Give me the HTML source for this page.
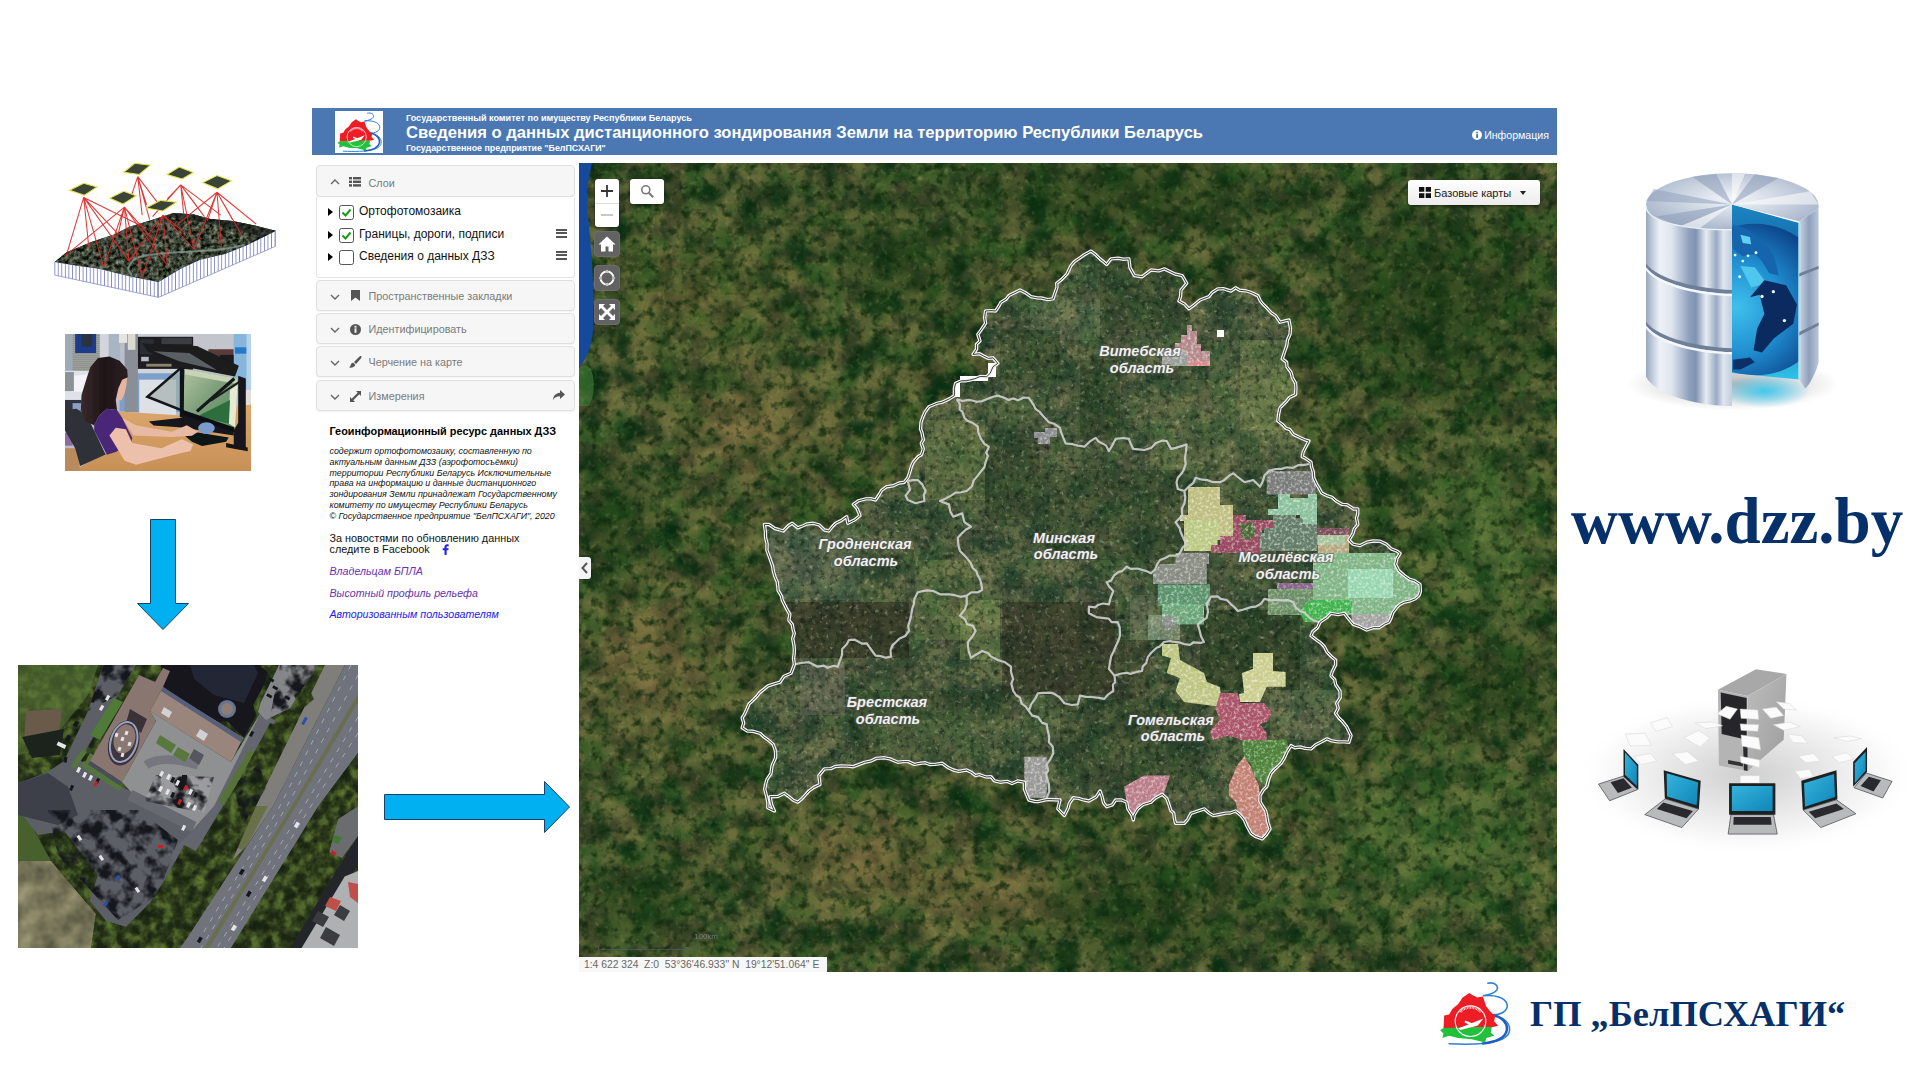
<!DOCTYPE html>
<html lang="ru">
<head>
<meta charset="utf-8">
<title>www.dzz.by</title>
<style>
*{box-sizing:border-box;margin:0;padding:0}
html,body{width:1920px;height:1080px;overflow:hidden;background:#fff}
body{position:relative;font-family:"Liberation Sans",sans-serif;color:#000}
.abs{position:absolute}
#hdr{left:312px;top:108px;width:1245px;height:47px;background:#4b77b2;color:#fff}
#hdr .logo{left:23px;top:3px;width:48px;height:42px;background:#fff}
#hdr .t1{left:94px;top:5px;font-size:9.07px;font-weight:bold;white-space:nowrap;line-height:10px}
#hdr .t2{left:94px;top:15px;font-size:16.6px;font-weight:bold;white-space:nowrap;line-height:19px}
#hdr .t3{left:94px;top:35px;font-size:8.87px;font-weight:bold;white-space:nowrap;line-height:10px}
#hdr .info{right:8px;top:21px;font-size:10.6px;white-space:nowrap;line-height:13px}
#side{left:312px;top:155px;width:266px;height:817px;background:#fff}
.pnl{left:3.5px;width:259px;height:31px;background:#f6f6f6;border:1px solid #e0e0e0;border-radius:4px;box-shadow:0 1px 1px rgba(0,0,0,.05);font-size:10.8px;color:#7a7a7a}
.pnl span{position:absolute;left:52px;top:8px;line-height:14px;white-space:nowrap}
.pnl svg{position:absolute}
#layers{left:3.5px;top:42px;width:259px;height:81px;border:1px solid #e4e4e4;border-top:none;border-radius:0 0 3px 3px;background:#fff}
.lrow{left:0;width:258px;height:22px;font-size:12px;line-height:14px;color:#111;white-space:nowrap}
.lrow .tri{position:absolute;left:11px;top:5px;width:0;height:0;border-left:5px solid #000;border-top:4.5px solid transparent;border-bottom:4.5px solid transparent}
.lrow .cb{position:absolute;left:22.3px;top:1.7px;width:15.5px;height:15.5px;border:1px solid #555;border-radius:2.5px;background:#fff}
.lrow .tx{position:absolute;left:42.5px;top:1px}
.lrow .hb{position:absolute;left:239.5px;top:2.6px;width:11px;height:9px;border-top:2px solid #555;border-bottom:2px solid #555}
.lrow .hb:after{content:"";position:absolute;left:0;top:1.5px;width:11px;height:2px;background:#555}
#stxt{left:17.5px;top:268.5px;width:240px}
#map{left:579px;top:163px;width:978px;height:809px;overflow:hidden;background:#3f5e2c}
.mbtn{background:#fff;border-radius:3px;box-shadow:0 1px 3px rgba(0,0,0,.5)}
.gbtn{background:#626262;border-radius:4px;border:1px solid #6c6c6c;width:26px;height:26px;left:15px}
</style>
</head>
<body>
<svg width="0" height="0" style="position:absolute"><defs><symbol id="lg" viewBox="55 48 320 290">
<path d="M272 56C300 50 322 66 312 86C304 100 278 108 250 112C300 106 352 118 358 152C362 182 325 198 290 197C340 204 374 232 368 270C360 312 280 334 100 325" fill="none" stroke="#2f7fd8" stroke-width="7" stroke-linecap="round"/>
<path d="M290 197C335 206 362 234 356 266C349 300 300 318 250 324" fill="none" stroke="#1c5fc0" stroke-width="11" stroke-linecap="round"/>
<path d="M78 200L100 195L115 170L140 150L160 120L190 100L205 110L225 120L250 115L258 140L265 160L290 190L305 200L300 225L318 245L290 252L75 256Z" fill="#ee1c25"/>
<path d="M60 265L75 255L290 250L285 275L300 290L265 300L260 320L200 305L140 300L100 290L70 300L75 280Z" fill="#22c13c"/>
<circle cx="195" cy="225" r="68" fill="none" stroke="#fff" stroke-width="5"/>
<path d="M140 257L252 213L228 244L150 264Z" fill="#fff"/><path d="M172 222L216 240L206 250L168 230Z" fill="#fff"/>
<path d="M150 185A60 60 0 0 1 240 185" fill="none" stroke="#fff" stroke-width="9" stroke-dasharray="4 3" opacity=".85"/>
</symbol></defs></svg>
<!-- ===== web app header ===== -->
<div id="hdr" class="abs">
  <div class="logo abs"><svg class="abs" style="left:1px;top:0.5px" width="47" height="41"><use href="#lg"/></svg></div>
  <div class="t1 abs">Государственный комитет по имуществу Республики Беларусь</div>
  <div class="t2 abs">Сведения о данных дистанционного зондирования Земли на территорию Республики Беларусь</div>
  <div class="t3 abs">Государственное предприятие "БелПСХАГИ"</div>
  <div class="info abs"><svg width="10" height="10" viewBox="0 0 10 10" style="vertical-align:-1px;margin-right:2px"><circle cx="5" cy="5" r="5" fill="#fff"/><rect x="4.2" y="4" width="1.8" height="4" fill="#4b77b2"/><rect x="4.2" y="1.7" width="1.8" height="1.6" fill="#4b77b2"/></svg>Информация</div>
</div>

<!-- ===== sidebar ===== -->
<div id="side" class="abs">
  <div class="pnl abs" style="top:10px;height:32px;border-radius:4px">
    <svg style="left:13px;top:12px" width="10" height="8" viewBox="0 0 10 8"><path d="M1 6l4-4 4 4" fill="none" stroke="#666" stroke-width="1.4"/></svg>
    <svg style="left:32px;top:11px" width="12" height="10" viewBox="0 0 12 10"><g fill="#555"><rect x="0" y="0" width="3" height="2.4"/><rect x="4" y="0" width="8" height="2.4"/><rect x="0" y="3.6" width="3" height="2.4"/><rect x="4" y="3.6" width="8" height="2.4"/><rect x="0" y="7.2" width="3" height="2.4"/><rect x="4" y="7.2" width="8" height="2.4"/></g></svg>
    <span style="top:10px">Слои</span>
  </div>
  <div id="layers" class="abs">
    <div class="lrow abs" style="top:6px"><i class="tri"></i><i class="cb"><svg width="13" height="13" viewBox="0 0 13 13"><path d="M2.5 6.5l3 3 5-6" fill="none" stroke="#1a9a1a" stroke-width="2"/></svg></i><span class="tx">Ортофотомозаика</span></div>
    <div class="lrow abs" style="top:29px"><i class="tri"></i><i class="cb"><svg width="13" height="13" viewBox="0 0 13 13"><path d="M2.5 6.5l3 3 5-6" fill="none" stroke="#1a9a1a" stroke-width="2"/></svg></i><span class="tx">Границы, дороги, подписи</span><i class="hb"></i></div>
    <div class="lrow abs" style="top:51px"><i class="tri"></i><i class="cb"></i><span class="tx">Сведения о данных ДЗЗ</span><i class="hb"></i></div>
  </div>
  <div class="pnl abs" style="top:125px">
    <svg style="left:13px;top:12px" width="10" height="8" viewBox="0 0 10 8"><path d="M1 2l4 4 4-4" fill="none" stroke="#666" stroke-width="1.4"/></svg>
    <svg style="left:34px;top:9px" width="9" height="11" viewBox="0 0 9 11"><path d="M0 0h9v11l-4.5-3.5L0 11z" fill="#555"/></svg>
    <span>Пространственные закладки</span>
  </div>
  <div class="pnl abs" style="top:158px">
    <svg style="left:13px;top:12px" width="10" height="8" viewBox="0 0 10 8"><path d="M1 2l4 4 4-4" fill="none" stroke="#666" stroke-width="1.4"/></svg>
    <svg style="left:33px;top:10px" width="11" height="11" viewBox="0 0 10 10"><circle cx="5" cy="5" r="5" fill="#555"/><rect x="4.1" y="4" width="1.8" height="4" fill="#f5f5f5"/><rect x="4.1" y="1.7" width="1.8" height="1.6" fill="#f5f5f5"/></svg>
    <span>Идентифицировать</span>
  </div>
  <div class="pnl abs" style="top:191px">
    <svg style="left:13px;top:12px" width="10" height="8" viewBox="0 0 10 8"><path d="M1 2l4 4 4-4" fill="none" stroke="#666" stroke-width="1.4"/></svg>
    <svg style="left:32px;top:9px" width="13" height="12" viewBox="0 0 13 12"><path d="M12 0c1 1 .5 2-1 3.500L7 8 5 6l4.500-4.500C11 0 11.500-.3 12 0zM4.300 6.800l2 2C6 11 3 12 0 11.500c1.500-1 1.500-2 2-3.200.4-1 1.300-1.500 2.300-1.500z" fill="#555"/></svg>
    <span>Черчение на карте</span>
  </div>
  <div class="pnl abs" style="top:225px">
    <svg style="left:13px;top:12px" width="10" height="8" viewBox="0 0 10 8"><path d="M1 2l4 4 4-4" fill="none" stroke="#666" stroke-width="1.4"/></svg>
    <svg style="left:33px;top:10px" width="11" height="11" viewBox="0 0 11 11"><path d="M6 0h5v5L9.300 3.300 3.300 9.300 5 11H0V6l1.700 1.700 6-6z" fill="#555"/></svg>
    <span>Измерения</span>
    <svg style="left:236px;top:9px" width="12" height="11" viewBox="0 0 12 11"><path d="M7 0l5 4.500L7 9V6.300C3.500 6.300 1.500 7.500 0 10c.3-4 2.500-7 7-7.300z" fill="#555"/></svg>
  </div>
  <div id="stxt" class="abs">
    <div style="font-weight:bold;font-size:10.9px;line-height:14px;white-space:nowrap;margin-top:0px">Геоинформационный ресурс данных ДЗЗ</div>
    <div style="font-style:italic;font-size:8.85px;line-height:10.95px;margin-top:8.1px;color:#111;white-space:nowrap">содержит ортофотомозаику, составленную по<br>актуальным данным ДЗЗ (аэрофотосъёмки)<br>территории Республики Беларусь Исключительные<br>права на информацию и данные дистанционного<br>зондирования Земли принадлежат Государственному<br>комитету по имуществу Республики Беларусь<br>© Государственное предприятие "БелПСХАГИ", 2020</div>
    <div style="font-size:10.85px;line-height:10.7px;margin-top:10.9px;position:relative;color:#111;white-space:nowrap">За новостями по обновлению данных<br>следите в Facebook<svg width="7" height="11" viewBox="0 0 7 11" style="position:absolute;left:112px;top:10.5px"><path d="M4.600 11V6.200h1.700l.3-1.900h-2V3.100c0-.6.200-.9 1-.9h1.100V.4C6.400.3 5.800.2 5.100.2 3.600.2 2.500 1.100 2.500 2.800v1.500H.700v1.900h1.800V11z" fill="#2222ee"/></svg></div>
    <div style="font-style:italic;font-size:10.65px;line-height:12px;margin-top:10.9px;color:#6a2fb0;white-space:nowrap">Владельцам БПЛА</div>
    <div style="font-style:italic;font-size:10.65px;line-height:12px;margin-top:9.400px;color:#6a2fb0;white-space:nowrap">Высотный профиль рельефа</div>
    <div style="font-style:italic;font-size:10.65px;line-height:12px;margin-top:9.400px;color:#1a1af0;white-space:nowrap">Авторизованным пользователям</div>
  </div>
</div>
<!-- ===== map ===== -->
<div id="map" class="abs">
<svg width="978" height="809" viewBox="579 163 978 809" style="position:absolute;left:0;top:0">
<defs>
<filter id="sat" x="0" y="0" width="100%" height="100%" color-interpolation-filters="sRGB">
  <feTurbulence type="fractalNoise" baseFrequency="0.038" numOctaves="6" seed="11" result="n"/>
  <feComponentTransfer in="n" result="n2">
    <feFuncR type="table" tableValues="0 0 0 0.08 0.35 0.75 0.95 1 1 1"/>
    <feFuncG type="table" tableValues="0 0 0 0.1 0.5 0.9 1 1 1 1"/>
    <feFuncB type="table" tableValues="0 0 0 0.15 0.6 1 1 1 1"/>
  </feComponentTransfer>
  <feColorMatrix in="n2" type="matrix" values="0.16 0.08 0.16 0 0.02  0.16 0.04 0.06 0 0.175  0.07 0.03 0.07 0 0.065  0 0 0 0 1"/>
</filter>
<filter id="sat2" x="0" y="0" width="100%" height="100%" color-interpolation-filters="sRGB">
  <feTurbulence type="fractalNoise" baseFrequency="0.11" numOctaves="3" seed="5" result="n"/>
  <feColorMatrix in="n" type="matrix" values="0 0 0 0 0.06  0 0 0 0 0.16  0 0 0 0 0.05  3.2 0 0 0 -1.55"/>
</filter>
<filter id="sat3" x="0" y="0" width="100%" height="100%" color-interpolation-filters="sRGB">
  <feTurbulence type="fractalNoise" baseFrequency="0.16" numOctaves="2" seed="8" result="n"/>
  <feColorMatrix in="n" type="matrix" values="0 0 0 0 0.72  0 0 0 0 0.7  0 0 0 0 0.45  0 3.0 0 0 -1.75"/>
</filter>
<filter id="ortho" x="0" y="0" width="100%" height="100%" color-interpolation-filters="sRGB">
  <feTurbulence type="fractalNoise" baseFrequency="0.2" numOctaves="3" seed="17" result="n"/>
  <feColorMatrix in="n" type="matrix" values="0 0 0 0 0.04  0 0 0 0 0.08  0 0 0 0 0.04  2.6 0 0 0 -1.3" result="d"/>
  <feColorMatrix in="n" type="matrix" values="0 0 0 0 0.78  0 0 0 0 0.82  0 0 0 0 0.68  0 -2.6 0 0 1.02" result="l"/>
  <feMerge><feMergeNode in="d"/><feMergeNode in="l"/></feMerge>
</filter>
<filter id="tex" x="0" y="0" width="100%" height="100%" color-interpolation-filters="sRGB">
  <feTurbulence type="fractalNoise" baseFrequency="0.35" numOctaves="2" seed="2" result="n"/>
  <feColorMatrix in="n" type="matrix" values="0 0 0 0 1  0 0 0 0 1  0 0 0 0 1  1.6 0 0 0 -0.72" result="w"/>
  <feComposite in="w" in2="SourceGraphic" operator="in" result="wi"/>
  <feMerge><feMergeNode in="SourceGraphic"/><feMergeNode in="wi"/></feMerge>
</filter>
<radialGradient id="gNW" cx="0.5" cy="0.5" r="0.5"><stop offset="0" stop-color="#8a7a3a" stop-opacity=".28"/><stop offset="1" stop-color="#8a7a3a" stop-opacity="0"/></radialGradient>
<radialGradient id="gDk" cx="0.5" cy="0.5" r="0.5"><stop offset="0" stop-color="#12330f" stop-opacity=".6"/><stop offset="1" stop-color="#173c14" stop-opacity="0"/></radialGradient>
<radialGradient id="gBr" cx="0.5" cy="0.5" r="0.5"><stop offset="0" stop-color="#a07c4c" stop-opacity=".5"/><stop offset="1" stop-color="#9a7a48" stop-opacity="0"/></radialGradient>
<radialGradient id="gLg" cx="0.5" cy="0.5" r="0.5"><stop offset="0" stop-color="#4f8436" stop-opacity=".45"/><stop offset="1" stop-color="#4f8436" stop-opacity="0"/></radialGradient>
<clipPath id="by"><path d="M954.4 395.6 L954.4 388.3 L955.6 383.3 L961.3 380.8 L966.1 380.7 L969.7 380.0 L974.9 378.7 L980.1 376.5 L986.7 376.7 L990.2 373.3 L992.9 366.9 L997.8 363.3 L993.0 357.8 L988.4 358.4 L983.2 355.8 L979.5 353.8 L973.0 354.4 L976.5 349.3 L976.5 344.2 L980.0 341.0 L977.8 334.4 L981.1 329.9 L985.6 323.3 L984.6 317.4 L985.6 311.0 L991.0 310.6 L995.6 311.0 L999.1 305.8 L1000.8 302.4 L1006.2 299.2 L1008.9 295.6 L1013.9 293.1 L1020.0 290.0 L1025.4 292.7 L1031.0 296.7 L1037.4 297.9 L1041.2 298.0 L1047.6 299.6 L1053.0 298.9 L1055.0 293.0 L1057.0 287.3 L1056.7 283.3 L1061.4 279.7 L1066.7 274.4 L1071.0 265.6 L1074.4 261.7 L1080.0 257.8 L1084.0 254.9 L1091.0 251.0 L1096.3 255.2 L1100.0 258.9 L1106.7 264.4 L1111.0 258.9 L1118.2 258.3 L1123.6 259.2 L1128.9 258.9 L1130.0 267.8 L1134.4 275.6 L1142.2 276.7 L1146.9 273.2 L1151.0 270.0 L1158.8 270.9 L1164.4 268.9 L1170.3 271.7 L1174.9 274.0 L1182.2 275.6 L1186.7 283.3 L1181.0 290.0 L1180.4 297.1 L1178.9 301.0 L1184.9 304.3 L1188.9 308.9 L1194.1 305.0 L1200.0 300.0 L1208.9 296.7 L1211.8 292.7 L1217.8 288.9 L1223.3 288.7 L1231.0 291.0 L1235.6 287.8 L1239.7 290.3 L1246.7 291.0 L1251.1 292.5 L1257.8 295.6 L1260.4 300.9 L1262.4 303.6 L1266.7 307.8 L1271.3 312.9 L1275.6 315.6 L1280.0 322.2 L1288.9 320.0 L1290.5 328.4 L1290.0 334.4 L1287.6 339.7 L1286.7 345.6 L1284.0 353.5 L1282.2 358.9 L1286.6 362.2 L1287.0 366.9 L1291.0 372.2 L1292.4 377.7 L1295.6 383.3 L1295.9 388.1 L1295.6 394.4 L1289.6 397.4 L1286.7 401.0 L1280.0 407.8 L1278.5 414.6 L1277.8 421.0 L1283.1 425.0 L1285.6 428.1 L1290.0 429.6 L1293.3 434.4 L1299.8 437.5 L1304.9 439.8 L1308.9 441.0 L1306.3 445.9 L1303.2 451.9 L1302.2 456.7 L1305.2 458.1 L1311.0 462.2 L1311.5 466.7 L1313.3 471.9 L1313.7 477.7 L1316.7 484.4 L1318.8 487.7 L1321.8 493.1 L1326.7 495.6 L1332.2 497.4 L1336.2 501.0 L1342.2 504.4 L1347.0 504.7 L1353.7 509.0 L1357.8 508.9 L1357.7 514.0 L1356.5 518.0 L1357.8 524.4 L1354.3 528.8 L1352.9 533.7 L1348.9 540.0 L1352.9 544.2 L1360.0 545.6 L1366.7 542.2 L1373.3 541.0 L1380.1 541.2 L1386.7 544.4 L1391.2 548.9 L1396.7 551.0 L1400.0 553.3 L1397.0 558.4 L1395.6 564.4 L1398.9 570.9 L1404.4 575.6 L1409.7 579.4 L1414.3 580.6 L1420.0 584.4 L1420.4 591.6 L1418.9 595.6 L1415.3 598.8 L1410.5 600.8 L1403.9 602.3 L1400.0 604.4 L1396.8 607.3 L1392.9 612.6 L1390.9 618.4 L1388.9 622.2 L1384.8 624.0 L1379.2 627.7 L1373.7 627.6 L1366.7 630.0 L1359.1 626.3 L1353.3 624.4 L1347.9 617.9 L1344.4 613.3 L1338.1 614.6 L1331.0 613.3 L1326.6 617.7 L1320.0 622.2 L1317.5 627.6 L1312.7 631.6 L1311.0 635.6 L1316.8 640.2 L1320.7 642.9 L1324.4 646.7 L1327.1 652.1 L1331.3 656.5 L1335.6 660.0 L1335.6 664.9 L1332.2 671.8 L1331.0 675.6 L1334.7 679.7 L1335.8 684.8 L1340.0 691.0 L1340.2 697.6 L1336.7 703.2 L1338.2 708.2 L1335.6 713.3 L1338.8 717.9 L1341.8 720.7 L1346.7 726.7 L1351.0 735.6 L1348.9 742.2 L1344.9 741.9 L1337.9 741.9 L1332.0 740.9 L1326.7 738.9 L1322.5 741.3 L1315.4 744.9 L1311.0 748.9 L1305.2 748.4 L1300.2 747.0 L1294.8 747.7 L1291.0 745.6 L1287.2 751.6 L1284.4 757.8 L1281.3 763.0 L1277.4 766.9 L1274.4 769.5 L1271.0 773.3 L1268.9 778.5 L1266.7 786.7 L1263.2 790.1 L1260.0 795.6 L1260.1 801.6 L1262.3 805.5 L1265.7 810.8 L1266.7 815.6 L1267.8 822.3 L1270.0 828.9 L1266.3 834.8 L1262.2 838.9 L1255.3 836.3 L1251.0 833.3 L1246.9 825.9 L1244.4 820.0 L1240.9 815.5 L1235.6 811.0 L1230.2 813.0 L1225.8 813.1 L1219.2 814.5 L1213.3 815.6 L1208.9 812.9 L1204.4 808.9 L1197.5 811.2 L1191.0 813.3 L1187.6 819.7 L1184.4 823.3 L1175.6 823.3 L1174.6 819.8 L1173.7 813.1 L1170.8 810.5 L1168.9 804.4 L1166.6 798.2 L1162.2 794.4 L1155.4 798.1 L1151.0 802.2 L1143.0 804.7 L1137.8 808.9 L1134.2 815.0 L1133.3 820.0 L1132.0 815.3 L1127.8 808.8 L1126.7 802.2 L1121.7 800.0 L1115.6 800.0 L1112.4 804.8 L1106.7 806.7 L1103.6 802.9 L1101.9 796.2 L1100.0 791.0 L1096.0 797.1 L1088.9 801.0 L1082.6 799.7 L1078.5 798.4 L1073.3 797.8 L1069.4 803.2 L1068.1 808.1 L1064.4 815.6 L1057.8 808.9 L1060.0 800.0 L1055.0 799.8 L1048.1 799.5 L1044.8 800.0 L1037.9 801.6 L1035.0 801.5 L1028.9 800.0 L1026.1 793.3 L1024.4 789.0 L1024.4 782.2 L1017.6 781.0 L1012.0 783.5 L1007.1 781.4 L1000.0 782.2 L994.4 780.8 L991.0 776.7 L986.1 777.0 L979.4 774.6 L975.6 775.6 L971.8 772.6 L966.7 770.0 L958.6 771.4 L953.3 770.0 L948.2 767.6 L942.2 763.3 L935.3 764.4 L929.7 764.5 L925.4 762.8 L920.0 763.3 L914.6 764.4 L908.2 761.6 L903.4 761.6 L897.8 762.2 L889.9 758.9 L884.4 757.8 L876.3 758.4 L871.0 761.0 L864.5 762.3 L860.0 764.1 L853.3 766.7 L847.5 766.1 L841.3 766.0 L835.2 766.5 L830.9 768.6 L824.4 768.9 L818.9 775.6 L820.0 784.4 L813.5 787.6 L808.9 791.0 L806.6 793.5 L802.5 798.2 L797.8 802.2 L793.3 800.3 L788.5 796.3 L784.4 793.3 L777.8 796.5 L770.0 796.7 L771.7 804.9 L774.4 811.0 L767.8 807.8 L767.9 802.4 L766.4 795.6 L764.7 789.1 L765.6 784.4 L766.9 779.6 L771.0 773.3 L771.8 767.1 L772.7 764.1 L775.6 757.8 L775.6 751.6 L773.3 744.4 L768.2 739.9 L763.8 736.9 L760.0 733.3 L753.0 731.3 L747.4 731.1 L742.2 727.8 L743.7 723.0 L742.2 717.8 L744.2 714.8 L747.1 708.4 L748.9 704.1 L753.3 700.0 L756.9 696.3 L759.7 692.6 L764.4 688.9 L768.0 685.9 L773.5 684.1 L780.0 682.2 L784.0 676.2 L791.0 673.3 L794.4 664.4 L793.5 658.5 L794.1 654.5 L794.4 649.9 L794.0 645.6 L792.7 638.8 L794.3 633.3 L793.2 629.9 L792.2 624.4 L788.9 620.3 L789.8 614.5 L786.7 608.9 L782.2 600.0 L781.5 596.2 L778.1 590.4 L777.8 586.6 L777.2 581.7 L775.1 577.1 L773.3 571.0 L772.6 566.1 L769.9 558.4 L768.3 554.0 L766.9 549.9 L767.1 543.7 L765.6 537.8 L765.4 531.7 L764.4 524.4 L769.1 524.5 L774.8 528.5 L778.6 529.5 L783.3 531.0 L788.3 525.8 L792.2 523.3 L797.8 527.8 L803.7 525.5 L806.8 524.0 L813.3 523.3 L819.2 524.9 L824.5 530.0 L828.9 531.0 L832.2 526.8 L835.6 523.3 L841.1 520.6 L846.7 516.7 L847.8 523.3 L854.8 519.8 L860.0 515.6 L857.1 508.6 L853.3 504.4 L858.3 500.9 L865.6 498.9 L871.4 498.8 L875.6 500.0 L879.5 494.0 L881.6 490.4 L886.7 486.7 L893.2 485.8 L899.1 483.0 L904.4 482.2 L907.8 477.8 L909.7 472.5 L911.4 466.2 L913.3 462.2 L917.9 456.8 L921.5 454.7 L923.3 448.9 L921.3 443.4 L923.4 439.7 L921.8 432.1 L920.5 429.0 L921.0 422.2 L922.7 417.3 L925.1 411.9 L928.9 406.7 L937.0 403.3 L942.2 402.2 L949.3 398.9Z"/></clipPath>
</defs>
<rect x="579" y="163" width="978" height="809" fill="#3e5f2a"/>
<rect x="579" y="163" width="978" height="809" filter="url(#sat)"/>
<!-- regional tints -->
<ellipse cx="750" cy="425" rx="110" ry="75" fill="url(#gBr)"/>
<ellipse cx="700" cy="300" rx="120" ry="90" fill="url(#gNW)"/>
<ellipse cx="650" cy="670" rx="100" ry="110" fill="url(#gBr)"/>
<ellipse cx="860" cy="860" rx="140" ry="70" fill="url(#gBr)"/>
<ellipse cx="1440" cy="840" rx="170" ry="110" fill="url(#gLg)"/>
<ellipse cx="1480" cy="540" rx="90" ry="120" fill="url(#gLg)"/>
<ellipse cx="1000" cy="900" rx="120" ry="50" fill="url(#gBr)"/>
<ellipse cx="1140" cy="195" rx="230" ry="60" fill="url(#gDk)"/>
<ellipse cx="1440" cy="300" rx="160" ry="150" fill="url(#gDk)"/>
<ellipse cx="1490" cy="690" rx="90" ry="70" fill="url(#gDk)"/>
<ellipse cx="610" cy="520" rx="50" ry="80" fill="url(#gDk)"/>
<ellipse cx="1140" cy="910" rx="140" ry="70" fill="url(#gDk)"/>
<ellipse cx="900" cy="260" rx="90" ry="70" fill="url(#gDk)"/>
<ellipse cx="640" cy="900" rx="70" ry="60" fill="url(#gDk)"/>
<rect x="579" y="163" width="978" height="809" filter="url(#sat2)" opacity=".8"/>
<rect x="579" y="163" width="978" height="809" filter="url(#sat3)" opacity=".28"/>
<!-- sea strip -->
<path d="M579 163h13c-2 10-5 22-5 33 0 20 4 45 5 67s2 45 1 67c-1 15-6 28-14 38z" fill="#16489c"/>
<path d="M579 368c6-6 12-2 14 8s0 24-4 30h-10z" fill="#4a8a3c" opacity=".55"/>
<!-- country -->
<g clip-path="url(#by)">
  <rect x="740" y="250" width="690" height="600" fill="#6f7c76" fill-opacity=".26"/>
  <rect x="786.0" y="602.0" width="123.0" height="56.0" fill="#2e2a1e" fill-opacity="0.55" /><rect x="1002.0" y="602.0" width="113.0" height="93.0" fill="#2e2a1e" fill-opacity="0.5" /><rect x="1115.0" y="640.0" width="35.0" height="60.0" fill="#2e2a1e" fill-opacity="0.3" /><rect x="925.0" y="420.0" width="60.0" height="80.0" fill="#a8b860" fill-opacity="0.22" /><rect x="915.0" y="560.0" width="60.0" height="80.0" fill="#a8b860" fill-opacity="0.16" /><rect x="960.0" y="600.0" width="40.0" height="60.0" fill="#b4c068" fill-opacity="0.26" /><rect x="1240.0" y="340.0" width="56.0" height="90.0" fill="#b0be68" fill-opacity="0.22" /><rect x="1150.0" y="380.0" width="146.0" height="90.0" fill="#a8b860" fill-opacity="0.12" /><rect x="770.0" y="530.0" width="90.0" height="70.0" fill="#8a9080" fill-opacity="0.22" /><rect x="800.0" y="665.0" width="45.0" height="50.0" fill="#7a7468" fill-opacity="0.4" /><rect x="1030.0" y="300.0" width="70.0" height="40.0" fill="#8fa57a" fill-opacity="0.18" /><rect x="1000.0" y="330.0" width="60.0" height="50.0" fill="#1f3a1c" fill-opacity="0.3" /><rect x="1080.0" y="360.0" width="40.0" height="80.0" fill="#1c3618" fill-opacity="0.3" /><rect x="1040.0" y="470.0" width="140.0" height="90.0" fill="#1e381a" fill-opacity="0.25" /><rect x="985.0" y="440.0" width="55.0" height="80.0" fill="#1c3418" fill-opacity="0.28" /><rect x="1100.0" y="260.0" width="90.0" height="70.0" fill="#1a3418" fill-opacity="0.25" /><rect x="1200.0" y="610.0" width="100.0" height="80.0" fill="#162c14" fill-opacity="0.4" /><rect x="1060.0" y="700.0" width="140.0" height="90.0" fill="#1a3416" fill-opacity="0.25" /><rect x="850.0" y="690.0" width="160.0" height="70.0" fill="#1e3a1a" fill-opacity="0.22" /><rect x="880.0" y="720.0" width="140.0" height="40.0" fill="#9eae76" fill-opacity="0.12" /><rect x="1130.0" y="595.0" width="30.0" height="45.0" fill="#869a7a" fill-opacity="0.25" /><rect x="1270.0" y="690.0" width="70.0" height="50.0" fill="#8a9070" fill-opacity="0.2" />
  <rect x="740" y="250" width="690" height="600" filter="url(#ortho)" opacity=".6"/>
  <g filter="url(#tex)">
  <path d="M1187.0 325.0 L1192.0 325.0 L1192.0 331.0 L1197.0 331.0 L1197.0 344.0 L1201.0 344.0 L1201.0 351.0 L1210.0 351.0 L1210.0 366.0 L1187.0 366.0 L1187.0 355.0 L1175.0 355.0 L1175.0 343.0 L1181.0 343.0 L1181.0 335.0 L1187.0 335.0Z" fill="#b98b8f" fill-opacity="0.95" /><rect x="1162.0" y="350.0" width="26.0" height="16.0" fill="#a9a9a9" fill-opacity="0.85" /><rect x="1188.0" y="361.0" width="22.0" height="5.0" fill="#d98c8c" fill-opacity="0.95" /><rect x="1217.0" y="330.0" width="7.0" height="7.0" fill="#ffffff" fill-opacity="1" /><path d="M1034.0 432.0 L1045.0 432.0 L1045.0 428.0 L1057.0 428.0 L1057.0 437.0 L1050.0 437.0 L1050.0 444.0 L1038.0 444.0 L1038.0 438.0 L1034.0 438.0Z" fill="#8f8f93" fill-opacity="0.9" /><rect x="1266.7" y="471.0" width="48.9" height="23.4" fill="#7c7d7c" fill-opacity="0.95" /><path d="M1278.0 494.0 L1290.0 494.0 L1290.0 498.0 L1308.0 498.0 L1308.0 494.0 L1317.0 494.0 L1317.0 524.0 L1300.0 524.0 L1300.0 515.0 L1268.0 515.0 L1268.0 509.0 L1278.0 509.0Z" fill="#8fc7a1" fill-opacity="0.95" /><path d="M1188.0 487.0 L1220.0 487.0 L1220.0 505.0 L1233.0 505.0 L1233.0 540.0 L1217.0 540.0 L1217.0 551.0 L1184.0 551.0 L1184.0 521.0 L1180.0 521.0 L1180.0 515.0 L1188.0 515.0Z" fill="#c9c787" fill-opacity="0.92" /><rect x="1186.0" y="520.0" width="32.0" height="31.0" fill="#b8d483" fill-opacity="0.55" /><path d="M1233.0 515.0 L1246.0 515.0 L1246.0 520.0 L1273.0 520.0 L1273.0 530.0 L1262.0 530.0 L1262.0 553.0 L1211.0 553.0 L1211.0 545.0 L1220.0 545.0 L1220.0 536.0 L1233.0 536.0Z" fill="#a04a63" fill-opacity="0.92" /><path d="M1240.0 524.0 L1252.0 522.0 L1256.0 532.0 L1250.0 540.0 L1242.0 538.0Z" fill="#4c6a38" fill-opacity="1" /><path d="M1273.0 515.0 L1296.0 515.0 L1296.0 518.0 L1303.0 518.0 L1303.0 524.0 L1317.0 524.0 L1317.0 551.0 L1260.0 551.0 L1260.0 533.0 L1264.0 533.0 L1264.0 528.0 L1273.0 528.0Z" fill="#66806c" fill-opacity="0.95" /><rect x="1317.0" y="528.0" width="32.0" height="9.0" fill="#8a4f62" fill-opacity="0.8" /><rect x="1317.8" y="535.0" width="31.2" height="18.0" fill="#c9b58a" fill-opacity="0.85" /><rect x="1317.0" y="535.0" width="28.0" height="10.0" fill="#9fd3b0" fill-opacity="0.6" /><path d="M1313.0 553.0 L1395.0 553.0 L1397.0 564.0 L1404.0 575.0 L1420.0 584.0 L1419.0 596.0 L1400.0 604.0 L1392.0 615.0 L1313.0 615.0Z" fill="#86bd8c" fill-opacity="0.92" /><rect x="1347.8" y="569.0" width="45.2" height="29.0" fill="#9bdcb6" fill-opacity="0.85" /><rect x="1277.0" y="583.0" width="36.0" height="6.0" fill="#9a6aa0" fill-opacity="0.8" /><rect x="1268.0" y="589.0" width="45.0" height="26.0" fill="#7faa7c" fill-opacity="0.7" /><path d="M1310.0 600.0 L1352.0 600.0 L1352.0 613.0 L1331.0 613.0 L1320.0 622.0 L1304.0 622.0 L1300.0 611.0Z" fill="#3cb34a" fill-opacity="0.95" /><path d="M1351.0 614.0 L1392.0 614.0 L1389.0 622.0 L1367.0 630.0 L1353.0 624.0Z" fill="#a6a6a6" fill-opacity="0.95" /><path d="M1175.6 553.0 L1209.0 553.0 L1209.0 564.0 L1206.7 564.0 L1206.7 584.0 L1153.0 584.0 L1153.0 574.0 L1160.0 564.0 L1175.6 564.0Z" fill="#8d9089" fill-opacity="0.92" /><rect x="1157.8" y="584.4" width="52.2" height="21.6" fill="#5f9a72" fill-opacity="0.9" /><rect x="1162.0" y="604.0" width="42.0" height="20.4" fill="#6fae80" fill-opacity="0.9" /><rect x="1148.0" y="615.0" width="32.0" height="25.0" fill="#8fa58a" fill-opacity="0.5" /><path d="M1164.0 614.0 L1172.0 616.0 L1176.0 626.0 L1168.0 630.0 L1162.0 624.0Z" fill="#8c8c8c" fill-opacity="0.9" /><path d="M1162.0 644.0 L1178.0 644.0 L1180.0 660.0 L1204.0 673.0 L1207.0 682.0 L1220.0 687.0 L1222.0 707.0 L1184.0 702.0 L1175.6 691.0 L1180.0 678.0 L1166.7 673.0 L1171.0 658.0 L1162.0 655.6Z" fill="#c5cb86" fill-opacity="0.95" /><path d="M1253.0 653.0 L1273.0 653.0 L1273.0 671.0 L1285.6 672.0 L1285.6 686.7 L1266.7 686.7 L1260.0 702.0 L1240.0 702.0 L1239.0 694.0 L1244.0 693.0 L1242.0 673.0 L1253.0 669.0Z" fill="#d3d593" fill-opacity="0.95" /><path d="M1220.0 693.0 L1237.8 693.0 L1240.0 703.0 L1264.0 703.0 L1272.0 713.0 L1266.7 722.0 L1260.0 724.0 L1266.7 733.0 L1266.7 741.0 L1257.8 744.0 L1244.0 741.0 L1228.9 735.6 L1213.0 740.0 L1210.0 731.0 L1220.0 720.0 L1215.6 709.0Z" fill="#b0546a" fill-opacity="0.95" /><path d="M1242.0 740.0 L1286.7 740.0 L1288.9 749.0 L1266.7 786.7 L1253.0 775.6 L1251.0 764.0 L1244.0 757.8Z" fill="#4f8a3a" fill-opacity="0.85" /><path d="M1124.0 786.7 L1144.0 775.6 L1170.0 775.6 L1164.0 793.0 L1153.0 802.0 L1137.8 809.0 L1133.0 817.8 L1126.7 802.0Z" fill="#c2808c" fill-opacity="0.95" /><path d="M1244.0 756.7 L1251.0 766.7 L1254.0 775.6 L1259.0 785.6 L1260.0 797.8 L1266.7 815.6 L1270.0 828.9 L1262.0 838.9 L1251.0 833.0 L1244.0 820.0 L1237.8 811.0 L1235.6 802.0 L1228.9 795.6 L1228.9 784.4 L1233.0 775.6 L1237.8 764.4Z" fill="#c98476" fill-opacity="0.95" /><rect x="1024.4" y="756.7" width="22.3" height="41.1" fill="#9c9c9c" fill-opacity="0.95" />
  </g>
</g>
<path d="M955 383h5v14h-5zM960 376h28v5h-28zM988 363h8v14h-8z" fill="#fff"/>
<path d="M956.7 399.0 L959.9 404.4 L959.7 409.7 L962.4 411.6 L964.4 417.8 L967.3 420.7 L973.2 423.1 L977.8 426.7 L978.3 432.3 L981.0 438.9 L984.4 443.9 L988.9 446.7 L986.2 452.7 L987.8 455.8 L985.6 462.2 L984.4 467.3 L981.7 470.5 L977.8 475.6 L973.7 480.4 L972.0 486.2 L966.7 491.0 L961.0 492.3 L955.5 492.6 L951.0 495.6 L944.2 499.4 L940.0 501.0 L948.9 504.4 L950.4 511.9 L953.3 516.7 L962.2 513.3 L964.4 522.2 L971.0 526.7 L965.8 529.7 L962.2 533.1 L957.8 537.8 L958.5 545.9 L960.0 551.0 L966.7 557.8 L970.7 563.2 L972.7 568.0 L976.4 571.3 L977.8 575.6 L980.0 579.0 L981.5 585.0 L982.2 590.0 L977.8 592.3 L971.2 592.3 L966.7 595.6 M956.7 399.0 L962.2 401.0 L968.6 399.8 L972.1 400.5 L976.6 401.8 L982.2 401.0 L988.9 398.4 L993.1 396.8 L997.8 395.6 L1003.5 397.5 L1008.9 400.0 L1012.8 398.4 L1018.0 400.2 L1023.9 397.5 L1028.9 397.8 L1033.6 404.9 L1035.6 408.9 L1039.9 412.2 L1043.5 416.5 L1048.9 422.2 L1053.9 423.7 L1060.0 427.8 L1061.0 432.2 L1064.0 439.4 L1065.6 443.3 L1072.7 444.2 L1077.9 445.6 L1084.4 446.7 L1089.6 441.7 L1095.6 437.8 L1098.6 441.5 L1106.0 445.4 L1108.9 451.0 L1112.3 445.4 L1115.6 438.9 L1123.4 438.0 L1128.9 438.9 L1130.4 443.1 L1133.3 448.9 L1138.5 449.3 L1144.4 450.0 L1151.5 447.8 L1155.6 443.3 L1162.3 440.6 L1166.7 441.0 L1171.0 448.9 L1174.7 448.1 L1182.7 445.8 L1186.7 444.4 L1186.3 449.0 L1185.0 458.1 L1185.7 464.0 L1184.0 469.0 L1182.4 472.6 L1177.8 477.8 L1176.5 482.3 L1177.8 489.0 L1184.4 491.0 M1184.4 491.0 L1188.2 487.2 L1193.3 482.9 L1195.6 477.8 L1202.2 479.7 L1207.7 480.2 L1212.4 482.0 L1220.0 482.2 L1223.6 480.6 L1229.3 475.6 L1233.3 473.3 L1237.7 477.0 L1244.4 482.2 L1253.3 480.0 L1260.0 486.7 L1262.6 481.8 L1264.4 475.6 L1268.8 470.9 L1275.6 469.0 L1281.5 468.9 L1286.8 467.3 L1293.0 467.8 L1298.7 465.0 L1303.0 465.1 L1309.0 464.0 M1184.4 491.0 L1185.3 497.6 L1184.5 503.2 L1181.9 508.6 L1182.2 515.6 L1175.6 522.2 L1179.8 528.4 L1180.5 531.8 L1183.9 539.4 L1186.7 544.4 L1182.7 547.4 L1179.8 553.2 L1175.6 555.6 L1169.5 555.6 L1164.7 558.3 L1160.0 560.0 L1157.6 563.5 L1155.0 569.6 L1151.0 573.3 L1146.2 571.0 L1142.8 570.1 L1137.4 568.5 L1130.7 568.9 L1126.7 566.7 L1122.0 571.2 L1118.7 571.9 L1113.8 575.7 L1111.2 580.5 L1106.7 582.2 L1108.9 586.3 L1113.3 591.0 L1110.2 599.2 L1108.9 604.4 L1102.8 603.5 L1097.5 605.2 L1095.2 607.4 L1088.9 606.7 L1088.9 613.3 L1096.3 617.1 L1102.2 617.8 L1108.8 618.7 L1111.6 622.1 L1117.8 622.2 L1119.7 627.4 L1120.0 635.6 L1118.3 640.8 L1115.6 646.7 L1113.5 651.7 L1111.2 656.2 L1109.9 662.9 L1108.9 668.9 L1114.4 675.6 M1114.4 675.6 L1121.4 673.5 L1126.9 672.8 L1130.5 673.9 L1137.5 671.7 L1142.0 671.0 L1142.8 666.4 L1146.1 663.3 L1147.8 657.1 L1151.0 653.0 L1156.6 647.8 L1159.4 646.7 L1164.0 642.0 L1169.9 641.0 L1172.5 641.6 L1180.3 642.7 L1184.0 644.0 L1189.8 644.8 L1193.5 642.3 L1200.5 642.9 L1204.0 642.0 L1201.2 636.8 L1199.3 629.5 L1197.8 624.4 L1200.7 621.9 L1206.7 617.8 L1208.0 611.5 L1206.7 604.4 L1211.0 596.7 L1217.7 596.3 L1220.6 598.8 L1226.7 600.0 L1231.9 605.1 L1233.7 606.5 L1237.8 611.0 L1243.5 609.5 L1251.0 607.1 L1255.6 606.7 L1261.0 603.6 L1264.4 598.9 L1271.2 600.4 L1276.3 599.7 L1281.2 600.4 L1288.4 600.2 L1293.3 602.2 L1295.7 607.4 L1300.0 611.0 L1304.2 612.4 L1308.5 616.8 L1314.4 620.9 L1320.0 622.2 M1114.4 675.6 L1115.3 682.3 L1112.9 684.5 L1113.3 691.0 L1107.6 694.9 L1104.4 698.9 L1099.0 697.9 L1091.3 697.0 L1086.5 697.0 L1080.0 695.6 L1077.8 704.4 L1071.9 705.0 L1064.4 703.3 L1059.4 697.1 L1053.3 693.3 L1049.2 692.6 L1043.2 692.9 L1037.8 693.3 L1035.6 698.2 L1031.1 704.3 L1028.9 711.0 M1028.9 711.0 L1032.2 715.6 L1038.1 717.1 L1041.9 722.6 L1046.7 724.4 L1047.5 729.5 L1049.2 736.8 L1048.9 742.2 L1052.7 746.5 L1053.3 753.3 L1049.9 759.9 L1046.7 764.4 L1048.3 770.7 L1046.3 773.7 L1047.1 778.4 L1048.9 784.4 L1049.3 791.4 L1046.7 797.8 M966.7 595.6 L966.7 604.4 L964.7 609.6 L960.0 615.6 L965.1 619.3 L967.0 624.2 L973.1 625.9 L975.6 631.0 L972.0 637.0 L967.8 642.2 L968.0 647.0 L968.8 651.7 L971.0 657.8 L975.8 654.7 L982.2 651.0 L987.9 653.1 L991.0 656.4 L997.8 660.0 L1005.0 662.3 L1011.0 666.7 L1011.0 671.8 L1013.1 679.0 L1011.3 683.6 L1013.3 691.0 L1016.1 695.2 L1020.0 697.7 L1021.6 703.6 L1025.5 706.3 L1028.9 711.0 M966.7 595.6 L960.5 596.8 L954.9 595.2 L949.5 594.4 L944.4 594.4 L940.0 594.3 L933.3 591.0 L927.7 590.4 L923.7 590.9 L917.8 592.2 L914.4 599.1 L913.8 604.4 L912.2 608.9 L911.1 615.7 L910.4 618.9 L908.2 625.6 L908.9 631.0 L905.2 636.0 L899.2 638.7 L896.0 642.0 L892.2 645.6 L890.5 650.5 L891.0 656.7 L885.9 657.7 L879.5 655.9 L875.6 655.6 L873.6 653.0 L868.7 646.2 L866.7 643.3 L862.2 643.7 L854.8 639.7 L848.9 640.0 L846.9 644.1 L842.2 648.9 L842.0 655.2 L840.3 659.7 L837.8 666.7 L833.7 665.8 L827.5 667.8 L823.9 665.7 L817.8 666.7 L808.9 662.2 L800.7 663.0 L794.4 664.4 M907.8 481.0 L912.9 480.1 L917.8 480.0 L922.2 484.4 L925.6 491.0 L923.8 495.2 L924.4 501.0 L915.6 503.3 L907.8 500.0 L905.6 495.6 L910.0 490.0 L907.8 481.0" fill="none" stroke="#d0d0d0" stroke-width="2.2" stroke-linejoin="round" stroke-opacity=".9"/>
<path d="M954.4 395.6 L954.4 388.3 L955.6 383.3 L961.3 380.8 L966.1 380.7 L969.7 380.0 L974.9 378.7 L980.1 376.5 L986.7 376.7 L990.2 373.3 L992.9 366.9 L997.8 363.3 L993.0 357.8 L988.4 358.4 L983.2 355.8 L979.5 353.8 L973.0 354.4 L976.5 349.3 L976.5 344.2 L980.0 341.0 L977.8 334.4 L981.1 329.9 L985.6 323.3 L984.6 317.4 L985.6 311.0 L991.0 310.6 L995.6 311.0 L999.1 305.8 L1000.8 302.4 L1006.2 299.2 L1008.9 295.6 L1013.9 293.1 L1020.0 290.0 L1025.4 292.7 L1031.0 296.7 L1037.4 297.9 L1041.2 298.0 L1047.6 299.6 L1053.0 298.9 L1055.0 293.0 L1057.0 287.3 L1056.7 283.3 L1061.4 279.7 L1066.7 274.4 L1071.0 265.6 L1074.4 261.7 L1080.0 257.8 L1084.0 254.9 L1091.0 251.0 L1096.3 255.2 L1100.0 258.9 L1106.7 264.4 L1111.0 258.9 L1118.2 258.3 L1123.6 259.2 L1128.9 258.9 L1130.0 267.8 L1134.4 275.6 L1142.2 276.7 L1146.9 273.2 L1151.0 270.0 L1158.8 270.9 L1164.4 268.9 L1170.3 271.7 L1174.9 274.0 L1182.2 275.6 L1186.7 283.3 L1181.0 290.0 L1180.4 297.1 L1178.9 301.0 L1184.9 304.3 L1188.9 308.9 L1194.1 305.0 L1200.0 300.0 L1208.9 296.7 L1211.8 292.7 L1217.8 288.9 L1223.3 288.7 L1231.0 291.0 L1235.6 287.8 L1239.7 290.3 L1246.7 291.0 L1251.1 292.5 L1257.8 295.6 L1260.4 300.9 L1262.4 303.6 L1266.7 307.8 L1271.3 312.9 L1275.6 315.6 L1280.0 322.2 L1288.9 320.0 L1290.5 328.4 L1290.0 334.4 L1287.6 339.7 L1286.7 345.6 L1284.0 353.5 L1282.2 358.9 L1286.6 362.2 L1287.0 366.9 L1291.0 372.2 L1292.4 377.7 L1295.6 383.3 L1295.9 388.1 L1295.6 394.4 L1289.6 397.4 L1286.7 401.0 L1280.0 407.8 L1278.5 414.6 L1277.8 421.0 L1283.1 425.0 L1285.6 428.1 L1290.0 429.6 L1293.3 434.4 L1299.8 437.5 L1304.9 439.8 L1308.9 441.0 L1306.3 445.9 L1303.2 451.9 L1302.2 456.7 L1305.2 458.1 L1311.0 462.2 L1311.5 466.7 L1313.3 471.9 L1313.7 477.7 L1316.7 484.4 L1318.8 487.7 L1321.8 493.1 L1326.7 495.6 L1332.2 497.4 L1336.2 501.0 L1342.2 504.4 L1347.0 504.7 L1353.7 509.0 L1357.8 508.9 L1357.7 514.0 L1356.5 518.0 L1357.8 524.4 L1354.3 528.8 L1352.9 533.7 L1348.9 540.0 L1352.9 544.2 L1360.0 545.6 L1366.7 542.2 L1373.3 541.0 L1380.1 541.2 L1386.7 544.4 L1391.2 548.9 L1396.7 551.0 L1400.0 553.3 L1397.0 558.4 L1395.6 564.4 L1398.9 570.9 L1404.4 575.6 L1409.7 579.4 L1414.3 580.6 L1420.0 584.4 L1420.4 591.6 L1418.9 595.6 L1415.3 598.8 L1410.5 600.8 L1403.9 602.3 L1400.0 604.4 L1396.8 607.3 L1392.9 612.6 L1390.9 618.4 L1388.9 622.2 L1384.8 624.0 L1379.2 627.7 L1373.7 627.6 L1366.7 630.0 L1359.1 626.3 L1353.3 624.4 L1347.9 617.9 L1344.4 613.3 L1338.1 614.6 L1331.0 613.3 L1326.6 617.7 L1320.0 622.2 L1317.5 627.6 L1312.7 631.6 L1311.0 635.6 L1316.8 640.2 L1320.7 642.9 L1324.4 646.7 L1327.1 652.1 L1331.3 656.5 L1335.6 660.0 L1335.6 664.9 L1332.2 671.8 L1331.0 675.6 L1334.7 679.7 L1335.8 684.8 L1340.0 691.0 L1340.2 697.6 L1336.7 703.2 L1338.2 708.2 L1335.6 713.3 L1338.8 717.9 L1341.8 720.7 L1346.7 726.7 L1351.0 735.6 L1348.9 742.2 L1344.9 741.9 L1337.9 741.9 L1332.0 740.9 L1326.7 738.9 L1322.5 741.3 L1315.4 744.9 L1311.0 748.9 L1305.2 748.4 L1300.2 747.0 L1294.8 747.7 L1291.0 745.6 L1287.2 751.6 L1284.4 757.8 L1281.3 763.0 L1277.4 766.9 L1274.4 769.5 L1271.0 773.3 L1268.9 778.5 L1266.7 786.7 L1263.2 790.1 L1260.0 795.6 L1260.1 801.6 L1262.3 805.5 L1265.7 810.8 L1266.7 815.6 L1267.8 822.3 L1270.0 828.9 L1266.3 834.8 L1262.2 838.9 L1255.3 836.3 L1251.0 833.3 L1246.9 825.9 L1244.4 820.0 L1240.9 815.5 L1235.6 811.0 L1230.2 813.0 L1225.8 813.1 L1219.2 814.5 L1213.3 815.6 L1208.9 812.9 L1204.4 808.9 L1197.5 811.2 L1191.0 813.3 L1187.6 819.7 L1184.4 823.3 L1175.6 823.3 L1174.6 819.8 L1173.7 813.1 L1170.8 810.5 L1168.9 804.4 L1166.6 798.2 L1162.2 794.4 L1155.4 798.1 L1151.0 802.2 L1143.0 804.7 L1137.8 808.9 L1134.2 815.0 L1133.3 820.0 L1132.0 815.3 L1127.8 808.8 L1126.7 802.2 L1121.7 800.0 L1115.6 800.0 L1112.4 804.8 L1106.7 806.7 L1103.6 802.9 L1101.9 796.2 L1100.0 791.0 L1096.0 797.1 L1088.9 801.0 L1082.6 799.7 L1078.5 798.4 L1073.3 797.8 L1069.4 803.2 L1068.1 808.1 L1064.4 815.6 L1057.8 808.9 L1060.0 800.0 L1055.0 799.8 L1048.1 799.5 L1044.8 800.0 L1037.9 801.6 L1035.0 801.5 L1028.9 800.0 L1026.1 793.3 L1024.4 789.0 L1024.4 782.2 L1017.6 781.0 L1012.0 783.5 L1007.1 781.4 L1000.0 782.2 L994.4 780.8 L991.0 776.7 L986.1 777.0 L979.4 774.6 L975.6 775.6 L971.8 772.6 L966.7 770.0 L958.6 771.4 L953.3 770.0 L948.2 767.6 L942.2 763.3 L935.3 764.4 L929.7 764.5 L925.4 762.8 L920.0 763.3 L914.6 764.4 L908.2 761.6 L903.4 761.6 L897.8 762.2 L889.9 758.9 L884.4 757.8 L876.3 758.4 L871.0 761.0 L864.5 762.3 L860.0 764.1 L853.3 766.7 L847.5 766.1 L841.3 766.0 L835.2 766.5 L830.9 768.6 L824.4 768.9 L818.9 775.6 L820.0 784.4 L813.5 787.6 L808.9 791.0 L806.6 793.5 L802.5 798.2 L797.8 802.2 L793.3 800.3 L788.5 796.3 L784.4 793.3 L777.8 796.5 L770.0 796.7 L771.7 804.9 L774.4 811.0 L767.8 807.8 L767.9 802.4 L766.4 795.6 L764.7 789.1 L765.6 784.4 L766.9 779.6 L771.0 773.3 L771.8 767.1 L772.7 764.1 L775.6 757.8 L775.6 751.6 L773.3 744.4 L768.2 739.9 L763.8 736.9 L760.0 733.3 L753.0 731.3 L747.4 731.1 L742.2 727.8 L743.7 723.0 L742.2 717.8 L744.2 714.8 L747.1 708.4 L748.9 704.1 L753.3 700.0 L756.9 696.3 L759.7 692.6 L764.4 688.9 L768.0 685.9 L773.5 684.1 L780.0 682.2 L784.0 676.2 L791.0 673.3 L794.4 664.4 L793.5 658.5 L794.1 654.5 L794.4 649.9 L794.0 645.6 L792.7 638.8 L794.3 633.3 L793.2 629.9 L792.2 624.4 L788.9 620.3 L789.8 614.5 L786.7 608.9 L782.2 600.0 L781.5 596.2 L778.1 590.4 L777.8 586.6 L777.2 581.7 L775.1 577.1 L773.3 571.0 L772.6 566.1 L769.9 558.4 L768.3 554.0 L766.9 549.9 L767.1 543.7 L765.6 537.8 L765.4 531.7 L764.4 524.4 L769.1 524.5 L774.8 528.5 L778.6 529.5 L783.3 531.0 L788.3 525.8 L792.2 523.3 L797.8 527.8 L803.7 525.5 L806.8 524.0 L813.3 523.3 L819.2 524.9 L824.5 530.0 L828.9 531.0 L832.2 526.8 L835.6 523.3 L841.1 520.6 L846.7 516.7 L847.8 523.3 L854.8 519.8 L860.0 515.6 L857.1 508.6 L853.3 504.4 L858.3 500.9 L865.6 498.9 L871.4 498.8 L875.6 500.0 L879.5 494.0 L881.6 490.4 L886.7 486.7 L893.2 485.8 L899.1 483.0 L904.4 482.2 L907.8 477.8 L909.7 472.5 L911.4 466.2 L913.3 462.2 L917.9 456.8 L921.5 454.7 L923.3 448.9 L921.3 443.4 L923.4 439.7 L921.8 432.1 L920.5 429.0 L921.0 422.2 L922.7 417.3 L925.1 411.9 L928.9 406.7 L937.0 403.3 L942.2 402.2 L949.3 398.9Z" fill="none" stroke="#f2f2f2" stroke-width="3.4" stroke-linejoin="round"/>
<path d="M954.4 395.6 L954.4 388.3 L955.6 383.3 L961.3 380.8 L966.1 380.7 L969.7 380.0 L974.9 378.7 L980.1 376.5 L986.7 376.7 L990.2 373.3 L992.9 366.9 L997.8 363.3 L993.0 357.8 L988.4 358.4 L983.2 355.8 L979.5 353.8 L973.0 354.4 L976.5 349.3 L976.5 344.2 L980.0 341.0 L977.8 334.4 L981.1 329.9 L985.6 323.3 L984.6 317.4 L985.6 311.0 L991.0 310.6 L995.6 311.0 L999.1 305.8 L1000.8 302.4 L1006.2 299.2 L1008.9 295.6 L1013.9 293.1 L1020.0 290.0 L1025.4 292.7 L1031.0 296.7 L1037.4 297.9 L1041.2 298.0 L1047.6 299.6 L1053.0 298.9 L1055.0 293.0 L1057.0 287.3 L1056.7 283.3 L1061.4 279.7 L1066.7 274.4 L1071.0 265.6 L1074.4 261.7 L1080.0 257.8 L1084.0 254.9 L1091.0 251.0 L1096.3 255.2 L1100.0 258.9 L1106.7 264.4 L1111.0 258.9 L1118.2 258.3 L1123.6 259.2 L1128.9 258.9 L1130.0 267.8 L1134.4 275.6 L1142.2 276.7 L1146.9 273.2 L1151.0 270.0 L1158.8 270.9 L1164.4 268.9 L1170.3 271.7 L1174.9 274.0 L1182.2 275.6 L1186.7 283.3 L1181.0 290.0 L1180.4 297.1 L1178.9 301.0 L1184.9 304.3 L1188.9 308.9 L1194.1 305.0 L1200.0 300.0 L1208.9 296.7 L1211.8 292.7 L1217.8 288.9 L1223.3 288.7 L1231.0 291.0 L1235.6 287.8 L1239.7 290.3 L1246.7 291.0 L1251.1 292.5 L1257.8 295.6 L1260.4 300.9 L1262.4 303.6 L1266.7 307.8 L1271.3 312.9 L1275.6 315.6 L1280.0 322.2 L1288.9 320.0 L1290.5 328.4 L1290.0 334.4 L1287.6 339.7 L1286.7 345.6 L1284.0 353.5 L1282.2 358.9 L1286.6 362.2 L1287.0 366.9 L1291.0 372.2 L1292.4 377.7 L1295.6 383.3 L1295.9 388.1 L1295.6 394.4 L1289.6 397.4 L1286.7 401.0 L1280.0 407.8 L1278.5 414.6 L1277.8 421.0 L1283.1 425.0 L1285.6 428.1 L1290.0 429.6 L1293.3 434.4 L1299.8 437.5 L1304.9 439.8 L1308.9 441.0 L1306.3 445.9 L1303.2 451.9 L1302.2 456.7 L1305.2 458.1 L1311.0 462.2 L1311.5 466.7 L1313.3 471.9 L1313.7 477.7 L1316.7 484.4 L1318.8 487.7 L1321.8 493.1 L1326.7 495.6 L1332.2 497.4 L1336.2 501.0 L1342.2 504.4 L1347.0 504.7 L1353.7 509.0 L1357.8 508.9 L1357.7 514.0 L1356.5 518.0 L1357.8 524.4 L1354.3 528.8 L1352.9 533.7 L1348.9 540.0 L1352.9 544.2 L1360.0 545.6 L1366.7 542.2 L1373.3 541.0 L1380.1 541.2 L1386.7 544.4 L1391.2 548.9 L1396.7 551.0 L1400.0 553.3 L1397.0 558.4 L1395.6 564.4 L1398.9 570.9 L1404.4 575.6 L1409.7 579.4 L1414.3 580.6 L1420.0 584.4 L1420.4 591.6 L1418.9 595.6 L1415.3 598.8 L1410.5 600.8 L1403.9 602.3 L1400.0 604.4 L1396.8 607.3 L1392.9 612.6 L1390.9 618.4 L1388.9 622.2 L1384.8 624.0 L1379.2 627.7 L1373.7 627.6 L1366.7 630.0 L1359.1 626.3 L1353.3 624.4 L1347.9 617.9 L1344.4 613.3 L1338.1 614.6 L1331.0 613.3 L1326.6 617.7 L1320.0 622.2 L1317.5 627.6 L1312.7 631.6 L1311.0 635.6 L1316.8 640.2 L1320.7 642.9 L1324.4 646.7 L1327.1 652.1 L1331.3 656.5 L1335.6 660.0 L1335.6 664.9 L1332.2 671.8 L1331.0 675.6 L1334.7 679.7 L1335.8 684.8 L1340.0 691.0 L1340.2 697.6 L1336.7 703.2 L1338.2 708.2 L1335.6 713.3 L1338.8 717.9 L1341.8 720.7 L1346.7 726.7 L1351.0 735.6 L1348.9 742.2 L1344.9 741.9 L1337.9 741.9 L1332.0 740.9 L1326.7 738.9 L1322.5 741.3 L1315.4 744.9 L1311.0 748.9 L1305.2 748.4 L1300.2 747.0 L1294.8 747.7 L1291.0 745.6 L1287.2 751.6 L1284.4 757.8 L1281.3 763.0 L1277.4 766.9 L1274.4 769.5 L1271.0 773.3 L1268.9 778.5 L1266.7 786.7 L1263.2 790.1 L1260.0 795.6 L1260.1 801.6 L1262.3 805.5 L1265.7 810.8 L1266.7 815.6 L1267.8 822.3 L1270.0 828.9 L1266.3 834.8 L1262.2 838.9 L1255.3 836.3 L1251.0 833.3 L1246.9 825.9 L1244.4 820.0 L1240.9 815.5 L1235.6 811.0 L1230.2 813.0 L1225.8 813.1 L1219.2 814.5 L1213.3 815.6 L1208.9 812.9 L1204.4 808.9 L1197.5 811.2 L1191.0 813.3 L1187.6 819.7 L1184.4 823.3 L1175.6 823.3 L1174.6 819.8 L1173.7 813.1 L1170.8 810.5 L1168.9 804.4 L1166.6 798.2 L1162.2 794.4 L1155.4 798.1 L1151.0 802.2 L1143.0 804.7 L1137.8 808.9 L1134.2 815.0 L1133.3 820.0 L1132.0 815.3 L1127.8 808.8 L1126.7 802.2 L1121.7 800.0 L1115.6 800.0 L1112.4 804.8 L1106.7 806.7 L1103.6 802.9 L1101.9 796.2 L1100.0 791.0 L1096.0 797.1 L1088.9 801.0 L1082.6 799.7 L1078.5 798.4 L1073.3 797.8 L1069.4 803.2 L1068.1 808.1 L1064.4 815.6 L1057.8 808.9 L1060.0 800.0 L1055.0 799.8 L1048.1 799.5 L1044.8 800.0 L1037.9 801.6 L1035.0 801.5 L1028.9 800.0 L1026.1 793.3 L1024.4 789.0 L1024.4 782.2 L1017.6 781.0 L1012.0 783.5 L1007.1 781.4 L1000.0 782.2 L994.4 780.8 L991.0 776.7 L986.1 777.0 L979.4 774.6 L975.6 775.6 L971.8 772.6 L966.7 770.0 L958.6 771.4 L953.3 770.0 L948.2 767.6 L942.2 763.3 L935.3 764.4 L929.7 764.5 L925.4 762.8 L920.0 763.3 L914.6 764.4 L908.2 761.6 L903.4 761.6 L897.8 762.2 L889.9 758.9 L884.4 757.8 L876.3 758.4 L871.0 761.0 L864.5 762.3 L860.0 764.1 L853.3 766.7 L847.5 766.1 L841.3 766.0 L835.2 766.5 L830.9 768.6 L824.4 768.9 L818.9 775.6 L820.0 784.4 L813.5 787.6 L808.9 791.0 L806.6 793.5 L802.5 798.2 L797.8 802.2 L793.3 800.3 L788.5 796.3 L784.4 793.3 L777.8 796.5 L770.0 796.7 L771.7 804.9 L774.4 811.0 L767.8 807.8 L767.9 802.4 L766.4 795.6 L764.7 789.1 L765.6 784.4 L766.9 779.6 L771.0 773.3 L771.8 767.1 L772.7 764.1 L775.6 757.8 L775.6 751.6 L773.3 744.4 L768.2 739.9 L763.8 736.9 L760.0 733.3 L753.0 731.3 L747.4 731.1 L742.2 727.8 L743.7 723.0 L742.2 717.8 L744.2 714.8 L747.1 708.4 L748.9 704.1 L753.3 700.0 L756.9 696.3 L759.7 692.6 L764.4 688.9 L768.0 685.9 L773.5 684.1 L780.0 682.2 L784.0 676.2 L791.0 673.3 L794.4 664.4 L793.5 658.5 L794.1 654.5 L794.4 649.9 L794.0 645.6 L792.7 638.8 L794.3 633.3 L793.2 629.9 L792.2 624.4 L788.9 620.3 L789.8 614.5 L786.7 608.9 L782.2 600.0 L781.5 596.2 L778.1 590.4 L777.8 586.6 L777.2 581.7 L775.1 577.1 L773.3 571.0 L772.6 566.1 L769.9 558.4 L768.3 554.0 L766.9 549.9 L767.1 543.7 L765.6 537.8 L765.4 531.7 L764.4 524.4 L769.1 524.5 L774.8 528.5 L778.6 529.5 L783.3 531.0 L788.3 525.8 L792.2 523.3 L797.8 527.8 L803.7 525.5 L806.8 524.0 L813.3 523.3 L819.2 524.9 L824.5 530.0 L828.9 531.0 L832.2 526.8 L835.6 523.3 L841.1 520.6 L846.7 516.7 L847.8 523.3 L854.8 519.8 L860.0 515.6 L857.1 508.6 L853.3 504.4 L858.3 500.9 L865.6 498.9 L871.4 498.8 L875.6 500.0 L879.5 494.0 L881.6 490.4 L886.7 486.7 L893.2 485.8 L899.1 483.0 L904.4 482.2 L907.8 477.8 L909.7 472.5 L911.4 466.2 L913.3 462.2 L917.9 456.8 L921.5 454.7 L923.3 448.9 L921.3 443.4 L923.4 439.7 L921.8 432.1 L920.5 429.0 L921.0 422.2 L922.7 417.3 L925.1 411.9 L928.9 406.7 L937.0 403.3 L942.2 402.2 L949.3 398.9Z" fill="none" stroke="#3c3c3c" stroke-width="1" stroke-linejoin="round"/>
<g font-family="Liberation Sans, sans-serif" font-style="italic" font-weight="bold" font-size="14.5" text-anchor="middle" fill="#f0f0f0" stroke="#555" stroke-opacity=".55" stroke-width="2.2" paint-order="stroke" stroke-linejoin="round"><text x="1140" y="355.5">Витебская</text><text x="1142" y="372.5">область</text><text x="865" y="548.5">Гродненская</text><text x="866" y="565.5">область</text><text x="1064" y="542.5">Минская</text><text x="1066" y="558.5">область</text><text x="1286" y="561.5">Могилёвская</text><text x="1288" y="578.5">область</text><text x="887" y="706.5">Брестская</text><text x="888" y="723.5">область</text><text x="1171" y="724.5">Гомельская</text><text x="1173" y="740.5">область</text></g>
</svg>

<!-- controls -->
<div class="mbtn abs" style="left:16px;top:16px;width:24px;height:48px;border-radius:3px"><div class="abs" style="left:0;top:24px;width:24px;height:1px;background:#ddd"></div>
<svg class="abs" style="left:0;top:0" width="24" height="48" viewBox="0 0 24 48"><path d="M6 12h12M12 6v12" stroke="#333" stroke-width="1.8" fill="none"/><path d="M6 36h12" stroke="#bbb" stroke-width="1.6"/></svg></div>
<div class="mbtn abs" style="left:51px;top:16px;width:34px;height:25px"><svg class="abs" style="left:10px;top:5px" width="15" height="15" viewBox="0 0 15 15"><circle cx="5.8" cy="5.800" r="4" fill="none" stroke="#777" stroke-width="1.6"/><path d="M8.800 8.800l4.400 4.400" stroke="#777" stroke-width="2"/></svg></div>
<div class="gbtn abs" style="top:68px"><svg width="24" height="24" viewBox="0 0 24 24"><path d="M12 4.500L3.500 12.500h2.500V19.500h4.500v-5h3v5H18v-7h2.500z" fill="#fff"/></svg></div>
<div class="gbtn abs" style="top:102px"><svg width="24" height="24" viewBox="0 0 24 24"><circle cx="12" cy="12" r="6.500" fill="none" stroke="#fff" stroke-width="2"/><path d="M12 3v5M12 16v5M3 12h5M16 12h5" stroke="#6a6a6a" stroke-width="2.500"/><path d="M12 4v3M12 17v3M4 12h3M17 12h3" stroke="#fff" stroke-width="1.2"/></svg></div>
<div class="gbtn abs" style="top:136px"><svg width="24" height="24" viewBox="0 0 24 24"><path d="M4 4h6L8 6l4 4 4-4-2-2h6v6l-2-2-4 4 4 4 2-2v6h-6l2-2-4-4-4 4 2 2H4v-6l2 2 4-4-4-4-2 2z" fill="#fff"/></svg></div>
<div class="mbtn abs" style="left:829px;top:17px;width:132px;height:25px;font-size:11px;line-height:25px;color:#222;background:linear-gradient(#fff,#ececec)"><svg class="abs" style="left:11px;top:7px" width="12" height="11" viewBox="0 0 12 11"><path d="M0 0h5.300v4.800H0zM6.700 0H12v4.800H6.700zM0 6.200h5.300V11H0zM6.700 6.200H12V11H6.700z" fill="#111"/></svg><span class="abs" style="left:26px;top:1px;white-space:nowrap">Базовые карты</span><i class="abs" style="left:112px;top:11px;border-top:4px solid #222;border-left:3.500px solid transparent;border-right:3.500px solid transparent"></i></div>
<div class="abs" style="left:0;top:394px;width:12px;height:22px;background:#f4f4f4;border-radius:0 3px 3px 0;box-shadow:0 0 2px rgba(0,0,0,.4)"><svg width="12" height="22" viewBox="0 0 12 22"><path d="M8 6l-4.500 5L8 16" fill="none" stroke="#555" stroke-width="2"/></svg></div>
<div class="abs" style="left:19px;top:775px;width:102px;height:12px;border-bottom:1px solid #5a5a6a;border-left:1px solid #5a5a6a;border-right:1px solid #5a5a6a;opacity:.7;height:4px;top:783px"></div>
<div class="abs" style="left:115px;top:769px;font-size:8px;color:#889;opacity:.8">100km</div>
<div class="abs" style="left:0;top:794px;width:248px;height:15px;background:#f7f7f7;font-size:10.3px;line-height:15px;color:#666;white-space:pre;padding-left:5px">1:4 622 324  Z:0  53°36'46.933'' N  19°12'51.064'' E</div>
</div>
<!-- ===== left column: drone survey illustration ===== -->
<svg class="abs" style="left:40px;top:150px" width="250" height="160" viewBox="0 0 1688 1080">
<defs>
<filter id="ter" x="0" y="0" width="100%" height="100%" color-interpolation-filters="sRGB">
  <feTurbulence type="fractalNoise" baseFrequency="0.035" numOctaves="4" seed="4" result="n"/>
  <feColorMatrix in="n" type="matrix" values="0.9 0 0 0 -0.22  0.9 0 0 0 -0.19  0.85 0 0 0 -0.22  0 0 0 0 1" result="c"/>
  <feComposite in="c" in2="SourceGraphic" operator="in"/>
</filter>
<pattern id="walls" width="24" height="200" patternUnits="userSpaceOnUse"><rect width="24" height="200" fill="#fff"/><rect x="0" width="6" height="200" fill="#7f86c8"/></pattern>
</defs>
<!-- base walls -->
<path d="M100 755L250 780L400 800L600 850L800 890L800 995L100 845Z" fill="url(#walls)" stroke="#8088c8" stroke-width="5"/>
<path d="M800 890L950 800L1080 740L1250 700L1400 640L1500 590L1590 545L1590 650L800 995Z" fill="url(#walls)" stroke="#8088c8" stroke-width="5"/>
<!-- terrain -->
<path id="terr" d="M100 755L180 690L350 620L500 570L600 520L760 470L900 425L1040 435L1150 465L1300 480L1450 510L1590 545L1500 590L1400 640L1250 700L1080 740L950 800L800 890L600 850L400 800L250 780Z" fill="#3a4236"/>
<path d="M100 755L180 690L350 620L500 570L600 520L760 470L900 425L1040 435L1150 465L1300 480L1450 510L1590 545L1500 590L1400 640L1250 700L1080 740L950 800L800 890L600 850L400 800L250 780Z" filter="url(#ter)"/>
<path d="M1380 640C1200 690 1000 680 800 700S620 760 600 790s40 50 10 70" fill="none" stroke="#7f9a90" stroke-width="14" opacity=".8"/>
<path d="M900 425L1040 435L1150 465L1300 480L1450 510L1590 545L1500 590C1300 520 1100 480 850 450Z" fill="#15181a" opacity=".55"/>
<!-- rays -->
<g stroke="#dc2828" stroke-width="7" fill="none" opacity=".92">
<path d="M295 320L175 720M295 320L330 660M295 320L430 790M295 320L600 750M295 320L520 560M295 320L700 520"/>
<path d="M570 385L200 690M570 385L430 790M570 385L600 750M570 385L690 860M570 385L860 780M570 385L520 600M570 385L760 600"/>
<path d="M660 180L620 300M660 180L690 440M660 180L740 470M660 180L790 350M660 180L720 370"/>
<path d="M830 440L600 750M830 440L690 860M830 440L860 780M830 440L1040 670M830 440L760 640M830 440L980 560"/>
<path d="M950 235L760 450M950 235L860 330M950 235L970 430M950 235L1040 670M950 235L1110 450M950 235L1220 440M950 235L1060 380"/>
<path d="M1195 285L930 500M1195 285L1040 670M1195 285L1130 480M1195 285L1225 660M1195 285L1360 570M1195 285L1460 500M1195 285L1300 470"/>
</g>
<!-- image frames -->
<g stroke="#e6e24a" stroke-width="7" fill="#3b4438">
<path d="M200 272L295 225L385 250L300 305Z"/>
<path d="M565 150L640 90L745 102L670 165Z"/>
<path d="M858 165L940 115L1035 152L960 195Z"/>
<path d="M1100 220L1195 172L1292 208L1200 262Z"/>
<path d="M472 325L565 278L650 308L560 365Z"/>
<path d="M715 392L815 340L920 352L830 412Z"/>
</g>
</svg>

<!-- ===== operator photo ===== -->
<svg class="abs" style="left:65px;top:334px" width="186" height="137" viewBox="0 0 1466 1080" preserveAspectRatio="none">
<defs>
<linearGradient id="desk" x1="0" y1="0" x2="0" y2="1"><stop offset="0" stop-color="#dba86e"/><stop offset="1" stop-color="#c78f55"/></linearGradient>
<linearGradient id="scr" x1="0" y1="0" x2="1" y2="1"><stop offset="0" stop-color="#b4c4a2"/><stop offset=".45" stop-color="#7fa07c"/><stop offset="1" stop-color="#4f8a55"/></linearGradient>
<linearGradient id="hair" x1="0" y1="0" x2="1" y2="0"><stop offset="0" stop-color="#3a2a2c"/><stop offset=".5" stop-color="#1e1517"/><stop offset="1" stop-color="#2c2022"/></linearGradient>
<pattern id="blind" width="20" height="16" patternUnits="userSpaceOnUse"><rect width="20" height="16" fill="#8d918a"/><rect width="20" height="6" fill="#a4a8a0"/></pattern>
<filter id="bl" x="-5%" y="-5%" width="110%" height="110%"><feGaussianBlur stdDeviation="5"/></filter>
<clipPath id="pcl"><rect width="1466" height="1080"/></clipPath>
</defs>
<g clip-path="url(#pcl)"><g filter="url(#bl)">
<rect x="-20" y="-20" width="1510" height="1120" fill="#b9bfc9"/>
<rect x="0" y="0" width="275" height="300" fill="url(#blind)"/>
<rect x="0" y="0" width="60" height="300" fill="#9eaab8"/>
<rect x="80" y="0" width="165" height="150" fill="#1f3b8c"/>
<rect x="130" y="0" width="85" height="100" fill="#2b3140"/>
<rect x="275" y="0" width="70" height="450" fill="#d2d6dc"/>
<rect x="345" y="0" width="90" height="450" fill="#a9b5c5"/>
<rect x="430" y="300" width="50" height="310" fill="#7f9fca"/>
<rect x="470" y="0" width="105" height="615" fill="#8a8e96"/>
<rect x="425" y="0" width="65" height="70" fill="#e4e4e0"/>
<rect x="495" y="0" width="60" height="125" fill="#dcdad0"/>
<rect x="575" y="0" width="760" height="30" fill="#c9cdd3"/>
<rect x="1010" y="0" width="320" height="150" fill="#c2c6cc"/>
<rect x="575" y="22" width="435" height="258" fill="#1d1d21"/>
<rect x="590" y="40" width="110" height="120" fill="#2c2d33"/>
<rect x="760" y="30" width="240" height="50" fill="#3a3c42"/>
<rect x="600" y="180" width="60" height="35" fill="#b8bcc2"/>
<rect x="640" y="235" width="200" height="22" fill="#8a8468"/>
<rect x="1130" y="120" width="200" height="60" fill="#5a3a3a"/>
<rect x="1220" y="165" width="180" height="90" fill="#1a1a1e"/>
<rect x="1330" y="0" width="136" height="450" fill="#86b6dc"/>
<rect x="1340" y="105" width="126" height="50" fill="#2878c8"/>
<rect x="1430" y="0" width="36" height="440" fill="#b6d2ea"/>
<rect x="575" y="275" width="330" height="36" fill="#d0d5db"/>
<rect x="575" y="310" width="360" height="305" fill="#7e9fca"/>
<rect x="585" y="360" width="290" height="285" fill="#dde0e5"/>
<rect x="1420" y="440" width="46" height="130" fill="#e4dcd8"/>
<rect x="0" y="290" width="190" height="230" fill="#dfe3e9"/>
<path d="M60 330L190 320L150 460L40 450Z" fill="#f2f4f7"/>
<rect x="0" y="300" width="70" height="150" fill="#8c929a"/>
<rect x="0" y="520" width="130" height="90" fill="#33353d"/>
<rect x="60" y="545" width="70" height="60" fill="#8aa0c4"/>
<!-- desk -->
<path d="M420 610L900 640L1466 555V1100H30L320 935L420 900Z" fill="url(#desk)"/>
<path d="M0 900H130L110 1100H0Z" fill="#b98a5b"/>
<path d="M0 780H60V880H0Z" fill="#8e6aa0"/>
<!-- monitor rig -->
<path d="M660 690L920 660L930 600L1330 740V800L1100 765L900 735L700 722Z" fill="#15161a"/>
<path d="M940 275L1360 350L1335 740L930 600Z" fill="url(#scr)"/>
<path d="M940 275L1360 350L1355 395L940 318Z" fill="#c9d3b6"/>
<path d="M1300 440L1360 400L1340 735L1290 705Z" fill="#e6ead2"/>
<path d="M1060 640L1300 520L1292 705L1080 660Z" fill="#2f6e3c"/>
<path d="M650 495L905 275L930 280L920 600Z" fill="#a3b0ae" opacity=".7"/>
<path d="M650 495L905 275L930 282L922 603Z" fill="none" stroke="#141519" stroke-width="20"/>
<path d="M1040 610L1335 350" fill="none" stroke="#15161a" stroke-width="26"/>
<path d="M1150 525L1400 360" fill="none" stroke="#1d1e22" stroke-width="16"/>
<path d="M610 75L1040 95L1370 250L1340 335L920 255L650 135Z" fill="#1a1b1f"/>
<path d="M700 135L980 150L1200 285L900 215Z" fill="#5a5e64"/>
<path d="M1365 330L1425 350L1425 915L1330 900L1330 760L1365 700Z" fill="#18191d"/>
<path d="M1270 860L1440 895L1440 925L1270 892Z" fill="#121316"/>
<path d="M905 275L940 285L935 660L905 655Z" fill="#111216"/>
<path d="M925 598L1335 738L1335 775L920 635Z" fill="#0f1013"/>
<!-- keyboard, mouse -->
<path d="M930 790L1010 770L1290 815L1270 850L1080 882L1000 850Z" fill="#111215"/>
<ellipse cx="1115" cy="742" rx="66" ry="46" fill="#7b9acb"/>
<!-- chair -->
<path d="M0 600L90 590L170 640L230 760L320 950L120 1040L80 900L0 760Z" fill="#2d3037"/>
<!-- person -->
<path d="M450 660L560 720L840 770L960 720L1050 770L1000 802L840 812L540 800Z" fill="#e8baa4"/>
<path d="M270 640L330 590L410 600L450 660L500 760L530 820L520 862L400 930L330 952L230 760L230 720Z" fill="#4a2878"/>
<path d="M350 800L400 740L480 750L530 860L760 900L920 830L1010 870L990 922L900 942L560 1030L470 1000Z" fill="#ecc0aa"/>
<path d="M430 350L490 340L485 400L470 470L445 522L405 522L420 430Z" fill="#e6b59e"/>
<path d="M200 260L260 190L350 178L430 210L490 280L495 340L450 360L420 430L400 520L410 600L330 590L270 640L230 720L160 690L125 600L130 480L170 350Z" fill="url(#hair)"/>
</g></g>
</svg>

<!-- arrows -->
<svg class="abs" style="left:130px;top:512px" width="66" height="124" viewBox="130 512 66 124"><path d="M150.500 519.500h25v84h13l-25.500 26-25.500-26h13z" fill="#00b0f0" stroke="#1c3f66" stroke-width="1"/></svg>
<svg class="abs" style="left:378px;top:775px" width="198" height="64" viewBox="378 775 198 64"><path d="M384.500 794.500h160v-13l25 25.500-25 25.500v-13h-160z" fill="#00b0f0" stroke="#1c3f66" stroke-width="1"/></svg>
<!-- ===== aerial orthophoto ===== -->
<svg class="abs" style="left:18px;top:665px" width="340" height="283" viewBox="0 0 340 283">
<defs>
<filter id="trees" x="0" y="0" width="100%" height="100%" color-interpolation-filters="sRGB">
  <feTurbulence type="fractalNoise" baseFrequency="0.09" numOctaves="3" seed="9" result="n"/>
  <feComponentTransfer in="n" result="n2"><feFuncR type="table" tableValues="0 0 0.05 0.3 0.7 1 1"/><feFuncG type="table" tableValues="0 0 0.1 0.5 0.9 1 1"/></feComponentTransfer>
  <feColorMatrix in="n2" type="matrix" values="0.26 0.04 0 0 0.08  0.32 0.04 0 0 0.12  0.12 0.02 0 0 0.06  0 0 0 0 1" result="c"/>
  <feComposite in="c" in2="SourceGraphic" operator="in"/>
</filter>
<filter id="shade" x="0" y="0" width="100%" height="100%" color-interpolation-filters="sRGB">
  <feTurbulence type="fractalNoise" baseFrequency="0.07" numOctaves="3" seed="21" result="n"/>
  <feColorMatrix in="n" type="matrix" values="0 0 0 0 0.08  0 0 0 0 0.09  0 0 0 0 0.11  4 0 0 0 -1.7" result="c"/>
  <feComposite in="c" in2="SourceGraphic" operator="in"/>
</filter>
<filter id="fld" x="0" y="0" width="100%" height="100%" color-interpolation-filters="sRGB">
  <feTurbulence type="fractalNoise" baseFrequency="0.05" numOctaves="3" seed="2" result="n"/>
  <feColorMatrix in="n" type="matrix" values="0.4 0 0 0 0.27  0.38 0 0 0 0.27  0.3 0 0 0 0.2  0 0 0 0 1" result="c"/>
  <feComposite in="c" in2="SourceGraphic" operator="in"/>
</filter>
<filter id="ab" x="-2%" y="-2%" width="104%" height="104%"><feGaussianBlur stdDeviation="0.7"/></filter>
<clipPath id="acl"><rect x="0" y="0" width="340" height="283"/></clipPath>
</defs>
<g clip-path="url(#acl)">
<rect width="340" height="283" fill="#2f3a27"/>
<rect width="340" height="283" filter="url(#trees)"/>
<g filter="url(#ab)">
<!-- sunlit trees top-left -->
<path d="M0 0H80L70 30L50 55L25 85L0 90Z" fill="#5b7a3a" opacity=".55"/>
<path d="M8 46L44 44L40 74L6 76Z" fill="#6b5a4a"/>
<path d="M4 72L46 64L42 90L14 93Z" fill="#1c221e"/>
<!-- field -->
<path d="M0 196L33 196L55 222L78 249L73 283L0 283Z" filter="url(#fld)"/>
<path d="M0 150L8 150L33 196L0 196Z" fill="#46602f"/>
<!-- left asphalt (road + parkings) -->
<path d="M85 0H118L100 30L62 95L86 112L112 126L150 148L176 160L166 180L150 210L132 238L108 262L88 256L40 196L6 152L0 118L28 108L46 96L70 46Z" fill="#5c5e66"/>
<path d="M0 118L30 108L50 122L60 150L40 160L0 150Z" fill="#3c3f48"/>
<!-- lawn strip beside podium -->
<path d="M96 33L105 37L82 75L72 70Z" fill="#4f7a38"/>
<path d="M64 84L69 87L57 104L53 101ZM72 88L77 91L70 102L66 99ZM66 96L104 122L101 126L62 101Z" fill="#55753c"/>
<!-- plaza + parking center -->
<path d="M132 46L170 70L213 97L243 47L255 55L212 128L196 152L176 166L150 150L112 126L104 117L138 56Z" fill="#8f9092"/>
<path d="M138 110L196 112L186 148L126 136Z" fill="#9c9c9e"/>
<path d="M128 100C140 92 160 94 180 100" stroke="#74767e" stroke-width="9" fill="none"/>
<path d="M112 130L176 162" stroke="#686a72" stroke-width="11" fill="none"/>
<path d="M142 70L158 80L153 88L138 78ZM160 82L172 89L167 97L155 90Z" fill="#58783c"/>
<path d="M176 84L186 90L181 100L171 93Z" fill="#55575f"/>
<!-- access road right of building -->
<path d="M243 47L258 56L205 141L178 186L160 200L150 190L170 170L196 141Z" fill="#64666e"/>
<path d="M232 84L238 88L206 140L200 136Z" fill="#567238"/>
<!-- dark tower block + shadow -->
<path d="M143 0H240L250 7L244 24L235 40L238 50L226 73L209 56L200 57L170 39L145 22Z" fill="#14161e"/>
<path d="M172 0H236L240 8L226 38L196 30L176 14Z" fill="#232734"/>
<!-- upper-right parking and sidewalk -->
<path d="M261 0H300L287 20L272 43L248 55L240 47L243 37Z" fill="#85868a"/>
<path d="M307 0H327L255 141L228 182L214 196L200 190L238 141Z" fill="#807e7a"/>
<path d="M236 141L250 141L226 186L214 180Z" fill="#68704a"/>
<!-- big road -->
<path d="M327 0H340V88L300.500 141L213 283H162L170 271.500L255 141Z" fill="#70727c"/>
<path d="M340 29V37L278 141L191 283H186L275 139Z" fill="#6a6e50"/>
<g stroke="#b4b7c0" stroke-width="0.9" stroke-dasharray="5 7" fill="none" opacity=".85">
<path d="M333 0L262 141L176 283"/><path d="M340 10L269 141L183 283"/><path d="M340 52L286 141L199 283"/><path d="M340 68L293 141L206 283"/>
</g>
<!-- building podium & main block -->
<path d="M121 10L137 17L145 3L152 6L145 22L132 46L138 56L104 117L72 96Z" fill="#8a7670"/>
<path d="M145 22L170 39L200 57L225 73L213 97L170 70L132 46Z" fill="#9a857c"/>
<path d="M145 22L225 73L223 77L143 26Z" fill="#56607a"/>
<path d="M72 96L104 117L102 120.500L70 99.500Z" fill="#4a4e5c"/>
<path d="M112 44L129 54L123 68L108 58Z" fill="#3a3038"/>
<ellipse cx="105.700" cy="78" rx="15" ry="23" transform="rotate(17 105.700 78)" fill="#3a3038"/>
<ellipse cx="105.700" cy="77" rx="14" ry="21.500" transform="rotate(17 105.700 77)" fill="#93a6c4"/>
<ellipse cx="105.700" cy="77" rx="12" ry="19.500" transform="rotate(17 105.700 77)" fill="#3f353c"/>
<ellipse cx="106.500" cy="74" rx="10.500" ry="15" transform="rotate(17 106.500 74)" fill="#8c7872"/>
<circle cx="209" cy="44" r="9" fill="#667690"/><circle cx="209" cy="44" r="6" fill="#8d7b78"/>
<path d="M182 64L190 69L186 76L178 71Z" fill="#cfd1d4"/><path d="M146 42L154 47L151 53L143 48Z" fill="#cfd1d4"/>
<!-- right side: small parking + building -->
<path d="M320 154L340 141V171L324 193L311 187Z" fill="#6a6c70"/>
<path d="M315 170L324 172L320 179L313 176Z" fill="#3f7a30"/>
<path d="M340 171L324 196L272 283H283.600L340 200Z" fill="#24262c"/>
<path d="M326.700 211.500L340 206V283H283.600Z" fill="#aeb0b2"/>
<path d="M312 232L323 236L318 246L307 241ZM330 217L340 219V238L332 232Z" fill="#c0504a"/>
<path d="M300 246L311 252L305 262L294 256ZM308 262L322 270L316 281L302 273ZM322 240L332 246L326 256L316 250Z" fill="#3a3a40"/>
</g>
<!-- tree clumps overlay -->
<g filter="url(#trees)">
<path d="M88 256L108 262L132 238L150 210L166 180L178 186L160 200L150 222L120 283H73L78 249Z"/>
<path d="M214 196L228 182L223 190L170 271.500L162 283H120L150 222L160 200L178 186L196 186Z"/>
<path d="M264 62L252 58L224 110L207 150L196 186L214 196L238 141Z"/>
<path d="M244 92L252 96L236 124L228 120Z"/>
<path d="M300.500 141L340 88V141L320 154L311 187L324 196L272 283H213Z"/>
<path d="M276 30L290 22L296 34L282 46Z"/>
<path d="M20 170L46 166L80 210L70 240L40 200Z"/>
</g>
<g filter="url(#shade)">
<path d="M30 145L120 145L160 175L140 230L100 255L40 190Z"/>
<path d="M100 30L118 0H85L70 46Z"/>
<path d="M215 120L240 100L250 120L225 160Z"/>
<path d="M262 0L300 0L287 20L272 43L252 52Z"/>
<path d="M138 110L196 112L186 148L126 136Z"/>
</g>
<!-- cars -->
<g fill="#e4e6ea">
<rect x="142" y="106" width="3" height="5.500" transform="rotate(25 143.500 109)"/><rect x="149" y="109" width="3" height="5.500" transform="rotate(25 150.500 112)"/><rect x="158" y="115" width="3" height="5.500" transform="rotate(25 159.500 118)"/>
<rect x="141" y="121" width="3" height="5.500" transform="rotate(25 142.500 124)"/><rect x="148" y="124" width="3" height="5.500" transform="rotate(25 149.500 127)"/><rect x="171" y="124" width="3" height="5.500" transform="rotate(25 172.500 127)"/>
<rect x="169" y="137" width="3" height="5.500" transform="rotate(25 170.500 140)"/><rect x="175" y="140" width="3" height="5.500" transform="rotate(25 176.500 143)"/><rect x="164" y="160" width="3" height="5.500" transform="rotate(25 165.500 163)"/>
<rect x="65" y="107" width="3" height="5.500" transform="rotate(25 66.500 110)"/><rect x="71" y="110" width="3" height="5.500" transform="rotate(25 72.500 113)"/><rect x="59" y="102" width="3" height="5.500" transform="rotate(25 60.500 105)"/>
<rect x="277" y="157" width="3.500" height="6" transform="rotate(30 279 160)"/><rect x="245" y="211" width="3.500" height="6" transform="rotate(30 247 214)"/><rect x="214" y="260" width="3.500" height="6" transform="rotate(30 216 263)"/>
<rect x="97" y="68" width="3" height="4" transform="rotate(17 98.500 70)"/><rect x="103" y="72" width="3" height="4" transform="rotate(17 104.500 74)"/><rect x="110" y="77" width="3" height="4" transform="rotate(17 111.500 79)"/><rect x="100" y="82" width="3" height="4" transform="rotate(17 101.500 84)"/><rect x="107" y="66" width="3" height="4" transform="rotate(17 108.500 68)"/><rect x="103" y="88" width="3" height="4" transform="rotate(17 104.500 90)"/>
<rect x="88" y="30" width="3" height="5.500" transform="rotate(30 89.500 33)"/><rect x="82" y="40" width="3" height="5.500" transform="rotate(30 83.500 43)"/><rect x="39" y="78" width="9" height="4" transform="rotate(25 43 80)"/>
<rect x="60" y="170" width="3" height="5.500" transform="rotate(-35 61.500 173)"/><rect x="82" y="190" width="3" height="5.500" transform="rotate(-35 83.500 193)"/><rect x="118" y="222" width="3" height="5.500" transform="rotate(-35 119.500 225)"/>
</g>
<g fill="#15171c">
<rect x="153" y="112" width="3" height="5.500" transform="rotate(25 154.500 115)"/><rect x="163" y="118" width="3" height="5.500" transform="rotate(25 164.500 121)"/><rect x="153" y="127" width="3" height="5.500" transform="rotate(25 154.500 130)"/><rect x="160" y="132" width="3" height="5.500" transform="rotate(25 161.500 135)"/><rect x="176" y="127" width="3" height="5.500" transform="rotate(25 177.500 130)"/><rect x="164" y="110" width="5" height="4"/>
<rect x="78" y="113" width="3" height="5.500" transform="rotate(25 79.500 116)"/><rect x="52" y="120" width="3" height="5.500" transform="rotate(25 53.500 123)"/><rect x="46" y="92" width="3" height="5.500" transform="rotate(10 47.500 95)"/>
<rect x="78" y="24" width="3" height="5.500" transform="rotate(30 79.500 27)"/><rect x="74" y="32" width="3" height="5.500" transform="rotate(30 75.500 35)"/><rect x="56" y="56" width="4" height="6" transform="rotate(30 58 59)"/><rect x="48" y="70" width="4" height="6" transform="rotate(30 50 73)"/>
<rect x="232" y="66" width="3" height="5.500" transform="rotate(30 233.500 69)"/><rect x="222" y="204" width="3.500" height="6" transform="rotate(30 224 207)"/><rect x="229" y="226" width="3.500" height="6" transform="rotate(30 231 229)"/><rect x="180" y="272" width="3.500" height="6" transform="rotate(30 182 275)"/>
<rect x="252" y="12" width="3" height="5.500" transform="rotate(-60 253.500 15)"/><rect x="256" y="20" width="3" height="5.500" transform="rotate(-60 257.500 23)"/><rect x="250" y="28" width="3" height="5.500" transform="rotate(-60 251.500 31)"/><rect x="268" y="30" width="3" height="5.500" transform="rotate(-60 269.500 33)"/>
</g>
<g fill="#c8202a"><rect x="166" y="120" width="3" height="5.500" transform="rotate(25 167.500 123)"/><rect x="160" y="134" width="3" height="5.500" transform="rotate(25 161.500 137)"/><rect x="76" y="116" width="3" height="5.500" transform="rotate(25 77.500 119)"/><rect x="140" y="180" width="5" height="3"/><rect x="313" y="186" width="5" height="3.500" transform="rotate(30 315 188)"/></g>
<g fill="#2a4fb0"><rect x="98" y="210" width="3" height="5.500" transform="rotate(35 99.500 213)"/><rect x="86" y="236" width="3" height="5.500" transform="rotate(35 87.500 239)"/><rect x="285" y="52" width="3" height="8" transform="rotate(30 286.500 56)"/></g>
</g>
</svg>
<!-- ===== database icon ===== -->
<svg class="abs" style="left:1620px;top:160px" width="220" height="260" viewBox="0 0 914 1080">
<defs>
<linearGradient id="cyl" x1="0" y1="0" x2="1" y2="0">
<stop offset="0" stop-color="#98a6bc"/><stop offset=".06" stop-color="#b9c5d6"/><stop offset=".16" stop-color="#eef2f7"/><stop offset=".3" stop-color="#dfe5ee"/><stop offset=".5" stop-color="#8fa0bc"/><stop offset=".58" stop-color="#7f92b2"/><stop offset=".7" stop-color="#e8edf4"/><stop offset=".82" stop-color="#9aaac4"/><stop offset=".9" stop-color="#dfe6ef"/><stop offset="1" stop-color="#c3cddc"/>
</linearGradient>
<linearGradient id="cylr" x1="0" y1="0" x2="1" y2="0"><stop offset="0" stop-color="#c9d3e0"/><stop offset=".5" stop-color="#8ea0bc"/><stop offset="1" stop-color="#b9c6d8"/></linearGradient>
<radialGradient id="topd" cx=".5" cy=".45" r=".6"><stop offset="0" stop-color="#f4f7fb"/><stop offset=".6" stop-color="#c3cddc"/><stop offset="1" stop-color="#a3b1c8"/></radialGradient>
<radialGradient id="globe" cx=".38" cy=".55" r=".62"><stop offset="0" stop-color="#3fc0ec"/><stop offset=".5" stop-color="#1f8ed0"/><stop offset="1" stop-color="#0b3f86"/></radialGradient>
<linearGradient id="inner" x1="0" y1="0" x2="0" y2="1"><stop offset="0" stop-color="#1b86c2"/><stop offset=".5" stop-color="#0d4f94"/><stop offset="1" stop-color="#2fc3ea"/></linearGradient>
<radialGradient id="shd" cx=".5" cy=".5" r=".5"><stop offset="0" stop-color="#000" stop-opacity=".28"/><stop offset="1" stop-color="#000" stop-opacity="0"/></radialGradient>
<radialGradient id="glow" cx=".5" cy=".5" r=".5"><stop offset="0" stop-color="#35c6ee" stop-opacity=".9"/><stop offset="1" stop-color="#35c6ee" stop-opacity="0"/></radialGradient>
<clipPath id="open"><path d="M465 185L745 262L745 912L465 885Z"/></clipPath>
</defs>
<ellipse cx="470" cy="930" rx="440" ry="110" fill="url(#shd)"/>
<ellipse cx="600" cy="960" rx="190" ry="70" fill="url(#glow)"/>
<!-- right wall -->
<path d="M745 255L825 200L825 840C815 880 790 930 770 950L745 912Z" fill="url(#cylr)"/>
<!-- interior -->
<path d="M465 185L745 262L745 912L465 885Z" fill="url(#inner)"/>
<g clip-path="url(#open)">
<circle cx="560" cy="580" r="315" fill="url(#globe)"/>
<path d="M470 270C540 280 600 330 640 400L660 480L620 470L590 420L560 390L510 400L470 370Z" fill="#1565ac"/>
<path d="M500 440L560 445L600 500L580 520L545 530L520 480Z" fill="#4fc6ee"/>
<path d="M500 310L540 320L545 350L510 345Z" fill="#5fd0f2"/>
<path d="M600 500L690 520L735 600L720 680L640 740L590 800L555 790L570 700L600 640L580 560L540 570Z" fill="#0a2a60"/>
<path d="M470 830L540 820L560 840L500 870L470 870Z" fill="#0b3068"/>
<circle cx="478" cy="395" r="6" fill="#e8f6ff"/><circle cx="510" cy="420" r="6" fill="#e8f6ff"/><circle cx="532" cy="398" r="6" fill="#e8f6ff"/><circle cx="565" cy="385" r="6" fill="#e8f6ff"/><circle cx="497" cy="485" r="6" fill="#e8f6ff"/><circle cx="590" cy="567" r="7" fill="#e8f6ff"/><circle cx="637" cy="547" r="7" fill="#e8f6ff"/><circle cx="683" cy="667" r="7" fill="#e8f6ff"/>
</g>
<path d="M745 262L745 912" stroke="#bfe6f4" stroke-width="10" opacity=".8"/>
<!-- left body -->
<path d="M108 190L108 900C150 980 330 1020 465 1022L465 290C330 290 160 250 108 190Z" fill="url(#cyl)"/>
<path d="M108 430C160 500 330 535 465 540L465 556C330 552 160 515 108 445Z" fill="#6f7f98"/>
<path d="M108 445C160 515 330 552 465 556L465 566C330 562 160 528 108 458Z" fill="#f4f7fb"/>
<path d="M108 672C160 742 330 777 465 782L465 798C330 794 160 757 108 687Z" fill="#6f7f98"/>
<path d="M108 687C160 757 330 794 465 798L465 808C330 804 160 770 108 700Z" fill="#f4f7fb"/>
<path d="M745 470L825 440L825 452L745 484ZM745 715L825 675L825 687L745 729Z" fill="#6f7f98"/>
<!-- top disc -->
<path d="M108 190C108 110 280 55 465 55S825 110 825 190L825 200L745 255L465 185L465 290C280 290 108 260 108 190Z" fill="url(#topd)"/>
<g opacity=".55">
<path d="M465 185L300 70L400 58Z" fill="#8d9db8"/><path d="M465 185L560 58L660 75Z" fill="#8d9db8"/><path d="M465 185L108 170L140 120Z" fill="#93a3bd"/><path d="M465 185L330 285L220 270Z" fill="#fff"/><path d="M465 185L790 130L825 185Z" fill="#fff"/><path d="M465 185L465 55L520 56Z" fill="#fff"/><path d="M465 185L150 235L250 275Z" fill="#8d9db8"/>
</g>
<path d="M108 190C108 260 280 290 465 290" fill="none" stroke="#e9eef5" stroke-width="6"/>
</svg>

<!-- ===== URL ===== -->
<div class="abs" id="url" style="left:1571px;top:484px;font-family:'Liberation Serif',serif;font-weight:bold;font-size:65px;line-height:74px;color:#06306a;white-space:nowrap;letter-spacing:0px">www.dzz.by</div>

<!-- ===== server + laptops ===== -->
<svg class="abs" style="left:1580px;top:660px" width="340" height="200" viewBox="0 0 1836 1080">
<defs>
<radialGradient id="flr" cx=".5" cy=".5" r=".5"><stop offset="0" stop-color="#cfcfcf"/><stop offset=".5" stop-color="#e9e9e9"/><stop offset=".9" stop-color="#fdfdfd"/><stop offset="1" stop-color="#fff"/></radialGradient>
<linearGradient id="lscr" x1="0" y1="0" x2="1" y2="1"><stop offset="0" stop-color="#36b4dc"/><stop offset="1" stop-color="#0f86b8"/></linearGradient>
<linearGradient id="twside" x1="0" y1="0" x2="1" y2="1"><stop offset="0" stop-color="#bdbdbd"/><stop offset="1" stop-color="#9c9c9c"/></linearGradient>
<filter id="sb"><feGaussianBlur stdDeviation="3"/></filter>
</defs>
<ellipse cx="900" cy="620" rx="900" ry="430" fill="url(#flr)"/>
<g filter="url(#sb)">
<!-- tower -->
<path d="M745 160L950 50L1115 75L905 195Z" fill="#a8a8a8"/>
<path d="M905 195L1115 75L1100 430L905 600Z" fill="url(#twside)"/>
<path d="M745 160L905 195L905 600L750 570Z" fill="#b4b4b4"/>
<path d="M760 175L900 205L900 430L765 400Z" fill="#26272a"/>
<path d="M880 430L905 436L905 600L885 595Z" fill="#2a2b2e"/>
<path d="M800 540L880 555L880 575L800 560Z" fill="#333"/>
<!-- papers -->
<g fill="#fbfbfb" stroke="#d8d8d8" stroke-width="3">
<path d="M740 290L790 250L850 265L810 320Z"/><path d="M865 265L960 270L965 320L870 315Z"/><path d="M865 345L965 350L960 385L870 380Z"/><path d="M870 405L965 420L975 485L875 465Z"/><path d="M865 520L970 540L970 580L870 555Z"/>
<path d="M985 265L1060 255L1100 300L1030 315Z"/><path d="M1060 225L1130 235L1170 270L1100 265Z"/><path d="M1045 350L1130 335L1190 360L1100 380Z"/><path d="M1120 400L1200 410L1230 450L1150 445Z"/>
<path d="M620 340L720 335L770 355L680 370Z"/><path d="M560 420L640 380L700 420L650 470Z"/><path d="M500 505L580 495L640 545L570 565Z"/><path d="M245 400L350 395L385 460L270 465Z"/><path d="M380 340L470 310L500 360L410 385Z"/><path d="M290 520L380 505L415 545L330 565Z"/>
<path d="M1180 520L1260 505L1300 545L1220 555Z"/><path d="M1360 520L1440 500L1480 535L1400 555Z"/><path d="M1160 600L1240 590L1260 630L1190 640Z"/><path d="M1370 420L1460 410L1520 425L1440 440Z"/><path d="M865 625L970 625L970 665L865 665Z"/>
</g>
<!-- laptops -->
<g>
<path d="M100 670L240 625L310 700L160 760Z" fill="#b9babc" stroke="#4a4c50" stroke-width="4"/><path d="M165 660L235 638L280 690L205 718Z" fill="#2a2b2e"/>
<path d="M235 480L315 565L315 700L235 630Z" fill="#1e2024"/><path d="M243 500L307 570L307 680L243 620Z" fill="url(#lscr)"/>
<path d="M460 750L640 805L550 905L350 835Z" fill="#b9babc" stroke="#4a4c50" stroke-width="4"/><path d="M450 770L610 815L575 855L415 805Z" fill="#2a2b2e"/>
<path d="M452 595L652 652L642 805L458 748Z" fill="#1e2024"/><path d="M468 612L638 660L630 785L470 737Z" fill="url(#lscr)"/>
<path d="M815 835L1045 835L1065 940L800 940Z" fill="#b9babc" stroke="#4a4c50" stroke-width="4"/><path d="M830 848L1030 848L1035 890L828 890Z" fill="#2a2b2e"/>
<path d="M805 665L1055 665L1055 835L805 835Z" fill="#1e2024"/><path d="M820 680L1040 680L1040 815L820 815Z" fill="url(#lscr)"/>
<path d="M1205 810L1385 755L1490 830L1300 905Z" fill="#b9babc" stroke="#4a4c50" stroke-width="4"/><path d="M1235 820L1385 775L1425 805L1270 855Z" fill="#2a2b2e"/>
<path d="M1195 652L1385 596L1390 752L1203 810Z" fill="#1e2024"/><path d="M1210 665L1372 615L1377 740L1215 792Z" fill="url(#lscr)"/>
<path d="M1480 690L1545 610L1685 655L1635 745Z" fill="#b9babc" stroke="#4a4c50" stroke-width="4"/><path d="M1515 680L1560 630L1625 650L1585 710Z" fill="#2a2b2e"/>
<path d="M1475 550L1550 470L1550 605L1475 685Z" fill="#1e2024"/><path d="M1484 558L1542 495L1542 598L1484 665Z" fill="url(#lscr)"/>
</g>
</g>
</svg>

<!-- ===== footer logo + name ===== -->
<svg class="abs" style="left:1438.500px;top:981px" width="72" height="66"><use href="#lg"/></svg>
<div class="abs" id="gp" style="left:1530px;top:993px;font-family:'Liberation Serif',serif;font-weight:bold;font-size:36.4px;line-height:42px;color:#06306a;white-space:nowrap">ГП „БелПСХАГИ“</div>
</body>
</html>
